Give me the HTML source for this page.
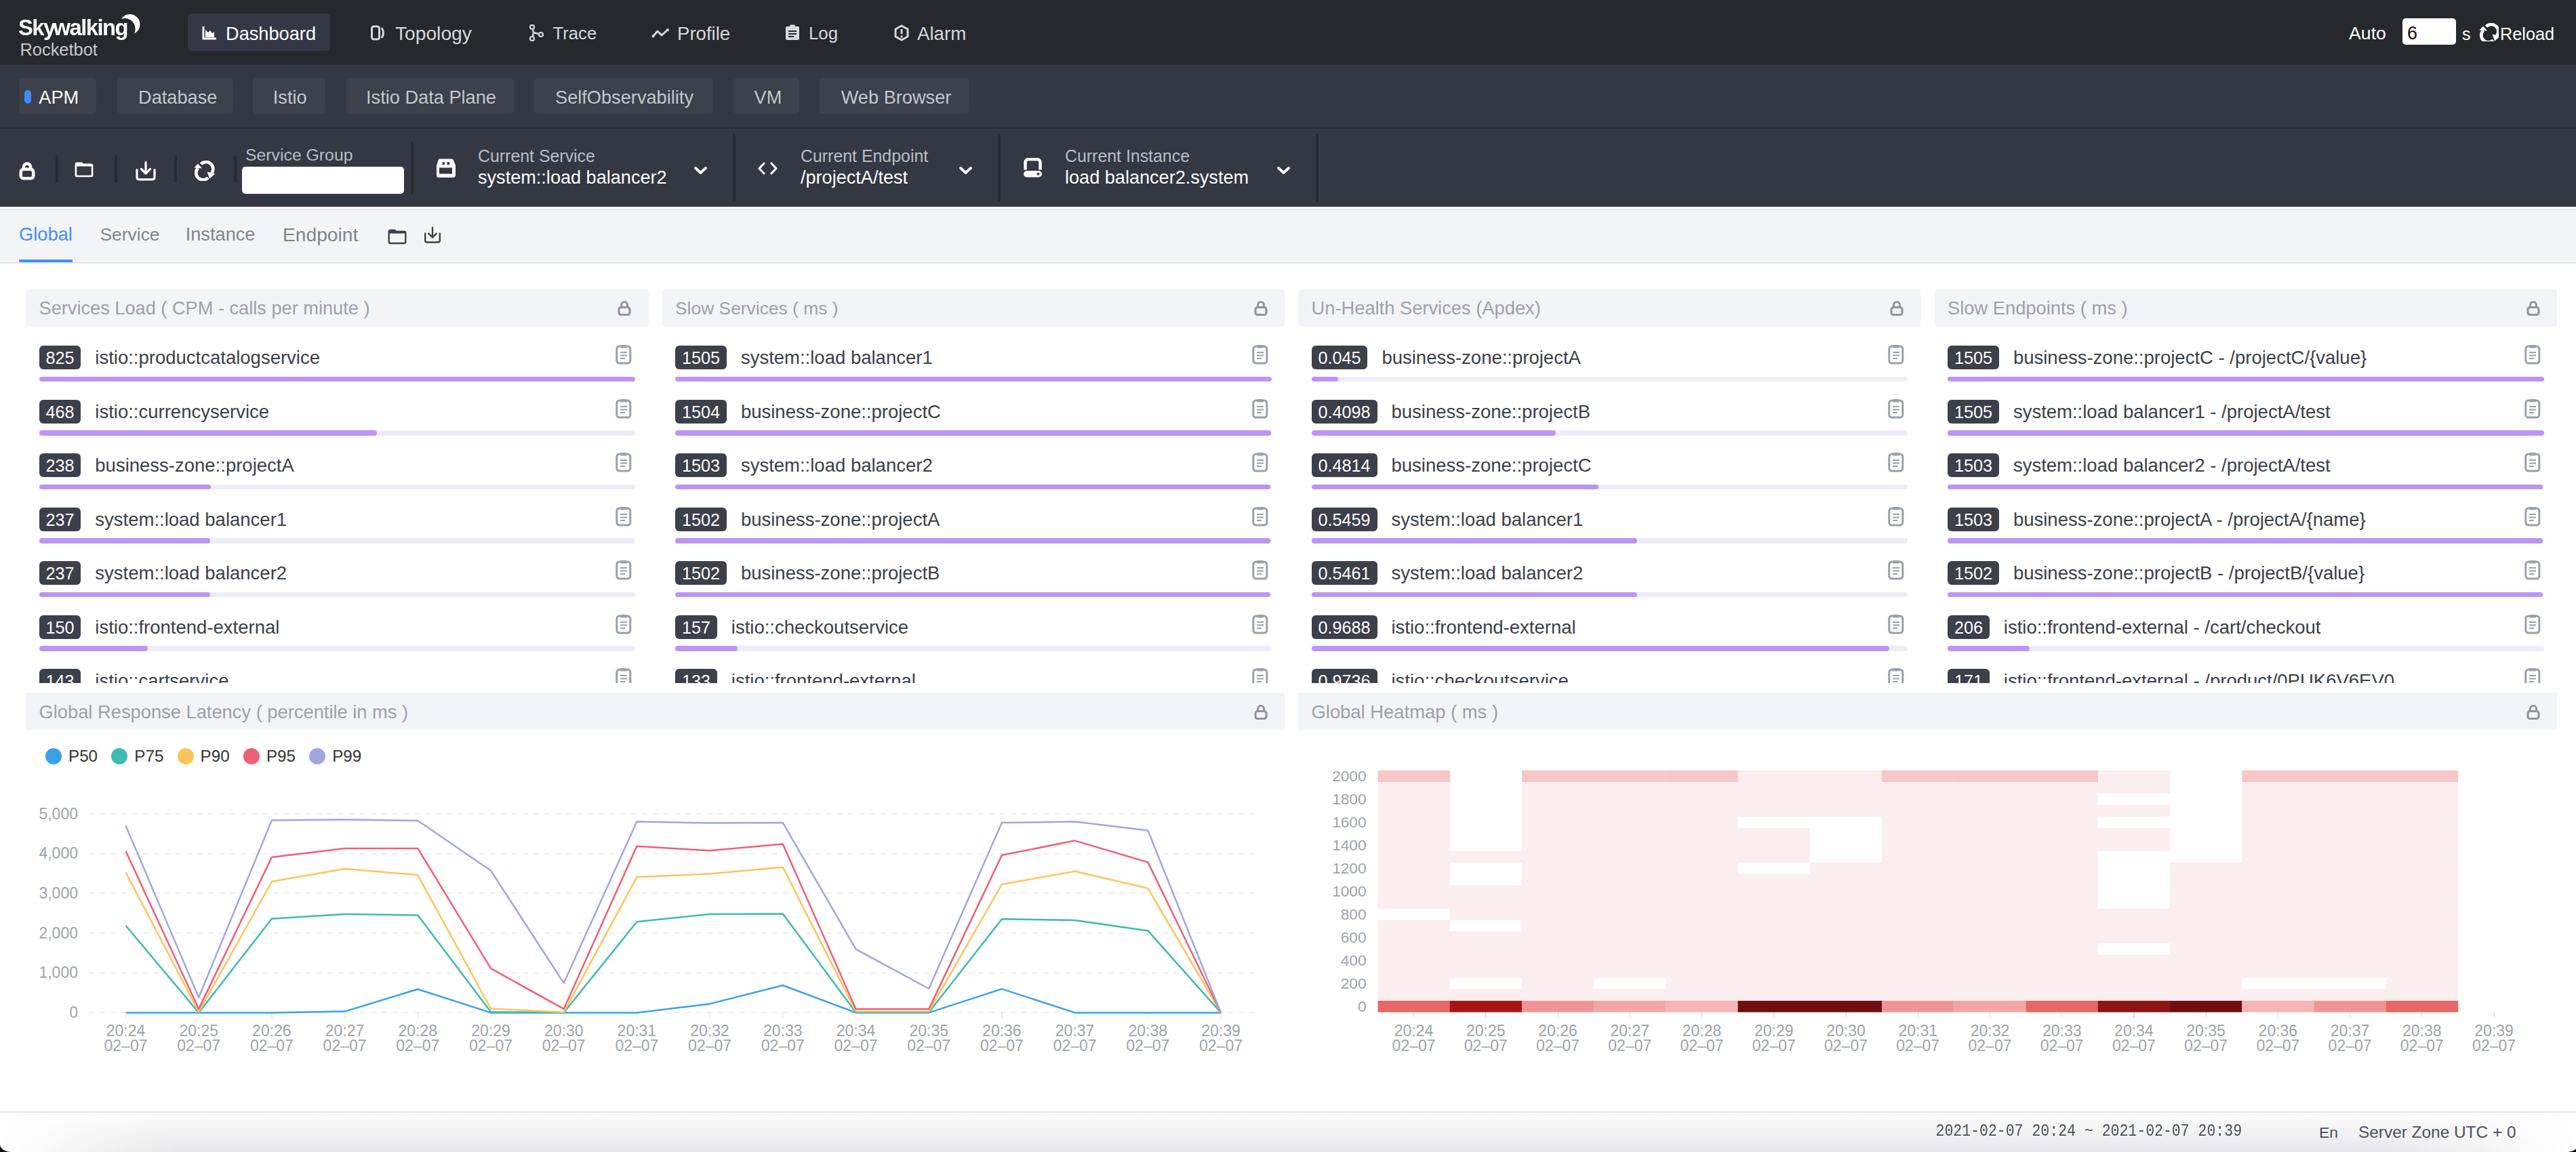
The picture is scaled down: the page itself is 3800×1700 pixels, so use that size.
<!DOCTYPE html><html><head><meta charset="utf-8"><style>
html,body{margin:0;padding:0;}
body{width:3800px;height:1700px;position:relative;overflow:hidden;background:#fff;font-family:"Liberation Sans",sans-serif;}
.t{position:absolute;white-space:nowrap;}
.r{position:absolute;}
</style></head><body>
<div class="r" style="left:0.0px;top:0.0px;width:3800.0px;height:95.0px;background:#25292d;border-radius:0px;"></div>
<div class="t" style="left:27.0px;top:23.1px;font-size:34px;line-height:34px;color:#ffffff;font-weight:bold;font-family:'Liberation Sans', sans-serif;letter-spacing:-1.6px;transform-origin:0 0;transform:scaleX(0.965);">Sk<span style="letter-spacing:-4px">y</span>walking</div>
<svg class="r" style="left:175.0px;top:19.0px;" width="34.0" height="34.0" viewBox="0 34 34"><defs><mask id="cm"><rect width="34" height="34" fill="#fff"/><circle cx="9" cy="23.5" r="15.6" fill="#000"/></mask></defs><circle cx="16.5" cy="17" r="15" fill="#fff" mask="url(#cm)"/></svg>
<div class="t" style="left:29.5px;top:61.4px;font-size:25.4px;line-height:25.4px;color:#c5c8d0;font-weight:normal;font-family:'Liberation Sans', sans-serif;">Rocketbot</div>
<div class="r" style="left:276.5px;top:20.0px;width:210.0px;height:55.0px;background:#343845;border-radius:6px;"></div>
<svg class="r" style="left:298.0px;top:38.0px;" width="22.0" height="21.0" viewBox="0 22 21"><path d="M2 1 V19 H21" stroke="#fff" stroke-width="3" fill="none"/><path d="M5 17 V6 L9 10 L12 7 L15 11 L18 9 V17 Z" fill="#fff"/></svg>
<div class="t" style="left:333.0px;top:35.9px;font-size:27.2px;line-height:27.2px;color:#ffffff;font-weight:normal;font-family:'Liberation Sans', sans-serif;">Dashboard</div>
<svg class="r" style="left:547.0px;top:37.0px;" width="23.0" height="23.0" viewBox="0 23 23"><rect x="1.5" y="2" width="11" height="19" rx="3" stroke="#d4d6da" stroke-width="3" fill="none"/><path d="M16 4 Q21 11.5 16 19" stroke="#d4d6da" stroke-width="3" fill="none"/></svg>
<div class="t" style="left:583.0px;top:35.0px;font-size:28.2px;line-height:28.2px;color:#d6d8dc;font-weight:normal;font-family:'Liberation Sans', sans-serif;">Topology</div>
<svg class="r" style="left:780.0px;top:36.0px;" width="23.0" height="25.0" viewBox="0 23 25"><path d="M5 4 L7 12 L5 21 M7 12 L18 15" stroke="#d6d8dc" stroke-width="2.5" fill="none"/><circle cx="5" cy="4" r="3" stroke="#d6d8dc" stroke-width="2.2" fill="#25292d"/><circle cx="5" cy="21" r="3" stroke="#d6d8dc" stroke-width="2.2" fill="#25292d"/><circle cx="18" cy="15" r="3" stroke="#d6d8dc" stroke-width="2.2" fill="#25292d"/></svg>
<div class="t" style="left:815.5px;top:37.2px;font-size:25.7px;line-height:25.7px;color:#d6d8dc;font-weight:normal;font-family:'Liberation Sans', sans-serif;">Trace</div>
<svg class="r" style="left:961.0px;top:41.0px;" width="27.0" height="15.0" viewBox="0 27 15"><path d="M2 13 L9 5 L15 11 L24 3" stroke="#d6d8dc" stroke-width="3" fill="none" stroke-linejoin="round"/><circle cx="2.5" cy="12.5" r="2" fill="#d6d8dc"/><circle cx="24" cy="3" r="2" fill="#d6d8dc"/></svg>
<div class="t" style="left:999.0px;top:35.5px;font-size:27.6px;line-height:27.6px;color:#d6d8dc;font-weight:normal;font-family:'Liberation Sans', sans-serif;">Profile</div>
<svg class="r" style="left:1158.0px;top:36.0px;" width="22.0" height="23.0" viewBox="0 22 23"><rect x="1" y="3" width="20" height="20" rx="2" fill="#d6d8dc"/><rect x="7" y="0.5" width="8" height="5" rx="1.5" fill="#d6d8dc"/><path d="M5 10 H17 M5 14 H17 M5 18 H13" stroke="#24282e" stroke-width="2"/></svg>
<div class="t" style="left:1193.0px;top:37.1px;font-size:25.8px;line-height:25.8px;color:#d6d8dc;font-weight:normal;font-family:'Liberation Sans', sans-serif;">Log</div>
<svg class="r" style="left:1319.0px;top:36.0px;" width="22.0" height="25.0" viewBox="0 22 25"><path d="M11 2 L20 7 V18 L11 23 L2 18 V7 Z" stroke="#d6d8dc" stroke-width="3" fill="none" stroke-linejoin="round"/><path d="M11 7 V14" stroke="#d6d8dc" stroke-width="3"/><circle cx="11" cy="18" r="1.7" fill="#d6d8dc"/></svg>
<div class="t" style="left:1353.0px;top:35.5px;font-size:27.7px;line-height:27.7px;color:#d6d8dc;font-weight:normal;font-family:'Liberation Sans', sans-serif;">Alarm</div>
<div class="t" style="left:3465.0px;top:36.3px;font-size:26.7px;line-height:26.7px;color:#ffffff;font-weight:normal;font-family:'Liberation Sans', sans-serif;">Auto</div>
<div class="r" style="left:3543.5px;top:27.0px;width:79.5px;height:38.5px;background:#ffffff;border-radius:5px;"></div>
<div class="t" style="left:3551.0px;top:36.0px;font-size:27px;line-height:27px;color:#111111;font-weight:normal;font-family:'Liberation Sans', sans-serif;">6</div>
<div class="t" style="left:3632.0px;top:37.8px;font-size:25px;line-height:25px;color:#ffffff;font-weight:normal;font-family:'Liberation Sans', sans-serif;">s</div>
<svg class="r" style="left:3657.0px;top:34.0px;" width="29.0" height="27.0" viewBox="0 32 30"><path d="M10.5 5.2 A10.3 10.3 0 0 1 25.5 19.5" stroke="#fff" stroke-width="4.6" fill="none"/><path d="M21 25.3 A10.3 10.3 0 0 1 6.2 10.8" stroke="#fff" stroke-width="4.6" fill="none"/><path d="M19.5 16.5 L31.5 19.5 L23 26.5 Z" fill="#fff"/><path d="M0.5 10.5 L6 4.5 L12 11.5 Z" fill="#fff"/></svg>
<div class="t" style="left:3688.0px;top:37.5px;font-size:25.3px;line-height:25.3px;color:#ffffff;font-weight:normal;font-family:'Liberation Sans', sans-serif;">Reload</div>
<div class="r" style="left:0.0px;top:95.0px;width:3800.0px;height:93.0px;background:#333842;border-radius:0px;"></div>
<div class="r" style="left:0.0px;top:188.0px;width:3800.0px;height:2.0px;background:#292d34;border-radius:0px;"></div>
<div class="r" style="left:28.0px;top:114.5px;width:114.0px;height:53.5px;background:#3c414b;border-radius:6px;"></div>
<div class="t" style="left:57.3px;top:129.7px;font-size:27.2px;line-height:27.2px;color:#ffffff;font-weight:normal;font-family:'Liberation Sans', sans-serif;">APM</div>
<div class="r" style="left:173.0px;top:114.5px;width:171.0px;height:53.5px;background:#3c414b;border-radius:6px;"></div>
<div class="t" style="left:204.0px;top:129.7px;font-size:27.2px;line-height:27.2px;color:#c3c7ce;font-weight:normal;font-family:'Liberation Sans', sans-serif;">Database</div>
<div class="r" style="left:373.0px;top:114.5px;width:107.0px;height:53.5px;background:#3c414b;border-radius:6px;"></div>
<div class="t" style="left:402.8px;top:129.7px;font-size:27.2px;line-height:27.2px;color:#c3c7ce;font-weight:normal;font-family:'Liberation Sans', sans-serif;">Istio</div>
<div class="r" style="left:510.0px;top:114.5px;width:248.0px;height:53.5px;background:#3c414b;border-radius:6px;"></div>
<div class="t" style="left:540.0px;top:129.7px;font-size:27.2px;line-height:27.2px;color:#c3c7ce;font-weight:normal;font-family:'Liberation Sans', sans-serif;">Istio Data Plane</div>
<div class="r" style="left:788.0px;top:114.5px;width:264.0px;height:53.5px;background:#3c414b;border-radius:6px;"></div>
<div class="t" style="left:819.0px;top:129.7px;font-size:27.2px;line-height:27.2px;color:#c3c7ce;font-weight:normal;font-family:'Liberation Sans', sans-serif;">SelfObservability</div>
<div class="r" style="left:1082.0px;top:114.5px;width:97.0px;height:53.5px;background:#3c414b;border-radius:6px;"></div>
<div class="t" style="left:1112.6px;top:129.7px;font-size:27.2px;line-height:27.2px;color:#c3c7ce;font-weight:normal;font-family:'Liberation Sans', sans-serif;">VM</div>
<div class="r" style="left:1209.0px;top:114.5px;width:221.0px;height:53.5px;background:#3c414b;border-radius:6px;"></div>
<div class="t" style="left:1240.7px;top:129.7px;font-size:27.2px;line-height:27.2px;color:#c3c7ce;font-weight:normal;font-family:'Liberation Sans', sans-serif;">Web Browser</div>
<div class="r" style="left:35.6px;top:133.0px;width:10.4px;height:20.0px;background:#3f8df4;border-radius:5px;"></div>
<div class="r" style="left:0.0px;top:190.0px;width:3800.0px;height:114.5px;background:#333842;border-radius:0px;"></div>
<svg class="r" style="left:28.0px;top:238.0px;" width="24.0" height="30.0" viewBox="0 24 30"><path d="M7 11 V8.5 A5 5 0 0 1 17 8.5 V11" stroke="#fff" stroke-width="4.5" fill="none"/><rect x="2.75" y="11.75" width="18.5" height="13.5" rx="4" stroke="#fff" stroke-width="4.5" fill="none"/></svg>
<div class="r" style="left:81.5px;top:229.0px;width:4.0px;height:41.0px;background:#282c32;border-radius:2px;"></div>
<div class="r" style="left:169.0px;top:229.0px;width:4.0px;height:41.0px;background:#282c32;border-radius:2px;"></div>
<div class="r" style="left:256.5px;top:229.0px;width:4.0px;height:41.0px;background:#282c32;border-radius:2px;"></div>
<div class="r" style="left:344.5px;top:229.0px;width:4.0px;height:41.0px;background:#282c32;border-radius:2px;"></div>
<svg class="r" style="left:109.6px;top:238.6px;" width="34.7" height="28.5" viewBox="0 28 23"><path d="M1.9 4 Q1.9 1.9 4 1.9 H10.5 L12.2 3.8 H24.1 Q26.1 3.8 26.1 5.8 V19 Q26.1 21 24.1 21 H4 Q1.9 21 1.9 18.9 Z" stroke="#fff" stroke-width="2.7" fill="none" stroke-linejoin="round"/><path d="M1.9 4 Q1.9 1.9 4 1.9 H10.5 L12.2 3.8 H24.1 Q26.1 3.8 26.1 5.8 V6.4 H1.9 Z" fill="#fff"/></svg>
<svg class="r" style="left:200.0px;top:237.5px;" width="30.0" height="29.0" viewBox="0 30 29"><path d="M15 1.6 V18 M8.5 11.5 L15 18 L21.5 11.5" stroke="#fff" stroke-width="3.2" fill="none" stroke-linecap="round" stroke-linejoin="round"/><path d="M2 12.5 V23.5 Q2 26.8 5.3 26.8 H24.7 Q28 26.8 28 23.5 V12.5" stroke="#fff" stroke-width="3.2" fill="none" stroke-linecap="round"/></svg>
<svg class="r" style="left:286.0px;top:237.0px;" width="32.0" height="30.0" viewBox="0 32 30"><path d="M10.5 5.2 A10.3 10.3 0 0 1 25.5 19.5" stroke="#fff" stroke-width="4.6" fill="none"/><path d="M21 25.3 A10.3 10.3 0 0 1 6.2 10.8" stroke="#fff" stroke-width="4.6" fill="none"/><path d="M19.5 16.5 L31.5 19.5 L23 26.5 Z" fill="#fff"/><path d="M0.5 10.5 L6 4.5 L12 11.5 Z" fill="#fff"/></svg>
<div class="t" style="left:362.0px;top:216.9px;font-size:24.8px;line-height:24.8px;color:#b9bdc6;font-weight:normal;font-family:'Liberation Sans', sans-serif;">Service Group</div>
<div class="r" style="left:357.0px;top:245.7px;width:239.0px;height:40.3px;background:#ffffff;border-radius:5px;"></div>
<div class="r" style="left:605.5px;top:208.5px;width:4.5px;height:78.0px;background:#282c32;border-radius:2px;"></div>
<svg class="r" style="left:643.0px;top:233.0px;" width="30.0" height="30.0" viewBox="0 30 30"><path d="M5 1.5 H23 Q25 1.5 26 3.5 L29 11 V25 Q29 29 25 29 H4 Q1 29 1 25 V11 L3.5 3.5 Q4 1.5 5 1.5 Z" fill="#fff"/><rect x="5" y="14.5" width="19" height="9" fill="#333842"/><path d="M9 10 L10.5 6 H13 V10 Z M16.5 10 V6 H19.5 L20.5 10 Z" fill="#333842"/></svg>
<div class="t" style="left:705.0px;top:218.4px;font-size:24.9px;line-height:24.9px;color:#b9bdc6;font-weight:normal;font-family:'Liberation Sans', sans-serif;">Current Service</div>
<div class="t" style="left:705.0px;top:248.4px;font-size:27.1px;line-height:27.1px;color:#ffffff;font-weight:normal;font-family:'Liberation Sans', sans-serif;">system::load balancer2</div>
<svg class="r" style="left:1023.5px;top:245.5px;" width="19.0" height="12.0" viewBox="0 19 12"><path d="M2 2 L9.5 9 L17 2" stroke="#fff" stroke-width="3.8" fill="none" stroke-linecap="round" stroke-linejoin="round"/></svg>
<div class="r" style="left:1081.0px;top:196.5px;width:4.0px;height:101.5px;background:#282c32;border-radius:2px;"></div>
<svg class="r" style="left:1116.5px;top:236.0px;" width="31.0" height="25.0" viewBox="0 31 25"><path d="M11 4 L3 12.5 L11 21 M20 4 L28 12.5 L20 21" stroke="#fff" stroke-width="3" fill="none" stroke-linejoin="round"/></svg>
<div class="t" style="left:1181.0px;top:218.4px;font-size:24.9px;line-height:24.9px;color:#b9bdc6;font-weight:normal;font-family:'Liberation Sans', sans-serif;">Current Endpoint</div>
<div class="t" style="left:1181.0px;top:248.4px;font-size:27.1px;line-height:27.1px;color:#ffffff;font-weight:normal;font-family:'Liberation Sans', sans-serif;">/projectA/test</div>
<svg class="r" style="left:1415.0px;top:245.5px;" width="19.0" height="12.0" viewBox="0 19 12"><path d="M2 2 L9.5 9 L17 2" stroke="#fff" stroke-width="3.8" fill="none" stroke-linecap="round" stroke-linejoin="round"/></svg>
<div class="r" style="left:1472.0px;top:196.5px;width:4.0px;height:101.5px;background:#282c32;border-radius:2px;"></div>
<svg class="r" style="left:1509.0px;top:233.0px;" width="29.0" height="30.0" viewBox="0 29 30"><path d="M3.5 17.5 V6.5 A4.5 4.5 0 0 1 8 2 H21 A4.5 4.5 0 0 1 25.5 6.5 V17.5" stroke="#fff" stroke-width="4.5" fill="none"/><rect x="1" y="19" width="27" height="9.5" rx="4.7" fill="#fff"/><circle cx="22.5" cy="23.8" r="2" fill="#333842"/></svg>
<div class="t" style="left:1571.0px;top:218.4px;font-size:24.9px;line-height:24.9px;color:#b9bdc6;font-weight:normal;font-family:'Liberation Sans', sans-serif;">Current Instance</div>
<div class="t" style="left:1571.0px;top:248.4px;font-size:27.1px;line-height:27.1px;color:#ffffff;font-weight:normal;font-family:'Liberation Sans', sans-serif;">load balancer2.system</div>
<svg class="r" style="left:1884.0px;top:245.5px;" width="19.0" height="12.0" viewBox="0 19 12"><path d="M2 2 L9.5 9 L17 2" stroke="#fff" stroke-width="3.8" fill="none" stroke-linecap="round" stroke-linejoin="round"/></svg>
<div class="r" style="left:1941.0px;top:196.5px;width:4.0px;height:101.5px;background:#282c32;border-radius:2px;"></div>
<div class="r" style="left:0.0px;top:306.5px;width:3800.0px;height:81.0px;background:#f3f4f6;border-radius:0px;"></div>
<div class="r" style="left:0.0px;top:303.5px;width:3800.0px;height:1.5px;background:#272a30;border-radius:0px;"></div>
<div class="r" style="left:0.0px;top:305.0px;width:3800.0px;height:3.0px;background:#ffffff;border-radius:0px;"></div>
<div class="r" style="left:0.0px;top:308.0px;width:3800.0px;height:1.5px;background:#e9eaed;border-radius:0px;"></div>
<div class="r" style="left:0.0px;top:387.0px;width:3800.0px;height:1.5px;background:#e3e5e9;border-radius:0px;"></div>
<div class="t" style="left:28.0px;top:332.3px;font-size:27.3px;line-height:27.3px;color:#448dfe;font-weight:normal;font-family:'Liberation Sans', sans-serif;">Global</div>
<div class="r" style="left:28.0px;top:383.0px;width:79.0px;height:3.5px;background:#448dfe;border-radius:1px;"></div>
<div class="t" style="left:147.5px;top:333.1px;font-size:26.4px;line-height:26.4px;color:#80858e;font-weight:normal;font-family:'Liberation Sans', sans-serif;">Service</div>
<div class="t" style="left:273.7px;top:332.4px;font-size:27.2px;line-height:27.2px;color:#80858e;font-weight:normal;font-family:'Liberation Sans', sans-serif;">Instance</div>
<div class="t" style="left:417.0px;top:331.5px;font-size:28.2px;line-height:28.2px;color:#80858e;font-weight:normal;font-family:'Liberation Sans', sans-serif;">Endpoint</div>
<svg class="r" style="left:572.0px;top:338.0px;" width="28.0" height="23.0" viewBox="0 28 23"><path d="M1.7 4 Q1.7 1.7 4 1.7 H10.5 L12.2 3.8 H24.3 Q26.3 3.8 26.3 5.8 V19 Q26.3 21 24.3 21 H4 Q1.7 21 1.7 18.7 Z" stroke="#3b4048" stroke-width="2.4" fill="none" stroke-linejoin="round"/><path d="M1.7 4 Q1.7 1.7 4 1.7 H10.5 L12.2 3.8 H24.3 Q26.3 3.8 26.3 5.8 V6.6 H1.7 Z" fill="#3b4048"/></svg>
<svg class="r" style="left:625.0px;top:334.0px;" width="26.0" height="26.0" viewBox="0 26 26"><path d="M13 1.8 V16 M7.2 10.6 L13 16.4 L18.8 10.6" stroke="#3b4048" stroke-width="2.4" fill="none" stroke-linecap="round" stroke-linejoin="round"/><path d="M2.2 10.5 V20.8 Q2.2 23.5 5 23.5 H21 Q23.8 23.5 23.8 20.8 V10.5" stroke="#3b4048" stroke-width="2.4" fill="none" stroke-linecap="round"/></svg>
<div class="r" style="left:38.0px;top:427.0px;width:918.5px;height:54.5px;background:#f3f4f7;border-radius:4px;"></div>
<div class="t" style="left:57.5px;top:441.4px;font-size:27.2px;line-height:27.2px;color:#9ba1ab;font-weight:normal;font-family:'Liberation Sans', sans-serif;">Services Load ( CPM - calls per minute )</div>
<svg class="r" style="left:911.0px;top:442.5px;" width="20.0" height="23.0" viewBox="0 20 23"><path d="M5.5 10 V7 A4.5 4.5 0 0 1 14.5 7 V10" stroke="#8f959e" stroke-width="3" fill="none"/><rect x="2" y="10.5" width="16" height="11" rx="3.2" stroke="#8f959e" stroke-width="3.2" fill="none"/></svg>
<div class="r" style="left:38px;top:481.5px;width:918.5px;height:526px;overflow:hidden">
<div class="r" style="left:19.5px;top:28.5px;width:61.8px;height:35px;background:#3c404a;border-radius:6px"></div>
<div class="t" style="left:19.5px;top:28.5px;width:61.8px;height:35px;line-height:36px;font-size:25.2px;color:#fff;text-align:center">825</div>
<div class="t" style="left:102.3px;top:32.6px;font-size:27.5px;line-height:27.5px;color:#3b4048">istio::productcatalogservice</div>
<svg class="r" style="left:870.0px;top:26.5px" width="24" height="30" viewBox="0 0 24 30"><rect x="1.8" y="3" width="20" height="25" rx="4" stroke="#9aa0a9" stroke-width="3" fill="none"/><rect x="7" y="1" width="10" height="4.5" rx="1.5" fill="#9aa0a9"/><path d="M7 12 H17 M7 16.5 H17 M7 21 H14" stroke="#9aa0a9" stroke-width="1.8"/></svg>
<div class="r" style="left:19.5px;top:74.0px;width:879.5px;height:7.5px;background:#eeecf6;border-radius:4px"></div>
<div class="r" style="left:19.5px;top:74.0px;width:879.5px;height:7.5px;background:#bd94f4;border-radius:4px"></div>
<div class="r" style="left:19.5px;top:108.0px;width:61.8px;height:35px;background:#3c404a;border-radius:6px"></div>
<div class="t" style="left:19.5px;top:108.0px;width:61.8px;height:35px;line-height:36px;font-size:25.2px;color:#fff;text-align:center">468</div>
<div class="t" style="left:102.3px;top:112.1px;font-size:27.5px;line-height:27.5px;color:#3b4048">istio::currencyservice</div>
<svg class="r" style="left:870.0px;top:106.0px" width="24" height="30" viewBox="0 0 24 30"><rect x="1.8" y="3" width="20" height="25" rx="4" stroke="#9aa0a9" stroke-width="3" fill="none"/><rect x="7" y="1" width="10" height="4.5" rx="1.5" fill="#9aa0a9"/><path d="M7 12 H17 M7 16.5 H17 M7 21 H14" stroke="#9aa0a9" stroke-width="1.8"/></svg>
<div class="r" style="left:19.5px;top:153.5px;width:879.5px;height:7.5px;background:#eeecf6;border-radius:4px"></div>
<div class="r" style="left:19.5px;top:153.5px;width:498.7px;height:7.5px;background:#bd94f4;border-radius:4px"></div>
<div class="r" style="left:19.5px;top:187.5px;width:61.8px;height:35px;background:#3c404a;border-radius:6px"></div>
<div class="t" style="left:19.5px;top:187.5px;width:61.8px;height:35px;line-height:36px;font-size:25.2px;color:#fff;text-align:center">238</div>
<div class="t" style="left:102.3px;top:191.6px;font-size:27.5px;line-height:27.5px;color:#3b4048">business-zone::projectA</div>
<svg class="r" style="left:870.0px;top:185.5px" width="24" height="30" viewBox="0 0 24 30"><rect x="1.8" y="3" width="20" height="25" rx="4" stroke="#9aa0a9" stroke-width="3" fill="none"/><rect x="7" y="1" width="10" height="4.5" rx="1.5" fill="#9aa0a9"/><path d="M7 12 H17 M7 16.5 H17 M7 21 H14" stroke="#9aa0a9" stroke-width="1.8"/></svg>
<div class="r" style="left:19.5px;top:233.0px;width:879.5px;height:7.5px;background:#eeecf6;border-radius:4px"></div>
<div class="r" style="left:19.5px;top:233.0px;width:253.7px;height:7.5px;background:#bd94f4;border-radius:4px"></div>
<div class="r" style="left:19.5px;top:267.0px;width:61.8px;height:35px;background:#3c404a;border-radius:6px"></div>
<div class="t" style="left:19.5px;top:267.0px;width:61.8px;height:35px;line-height:36px;font-size:25.2px;color:#fff;text-align:center">237</div>
<div class="t" style="left:102.3px;top:271.1px;font-size:27.5px;line-height:27.5px;color:#3b4048">system::load balancer1</div>
<svg class="r" style="left:870.0px;top:265.0px" width="24" height="30" viewBox="0 0 24 30"><rect x="1.8" y="3" width="20" height="25" rx="4" stroke="#9aa0a9" stroke-width="3" fill="none"/><rect x="7" y="1" width="10" height="4.5" rx="1.5" fill="#9aa0a9"/><path d="M7 12 H17 M7 16.5 H17 M7 21 H14" stroke="#9aa0a9" stroke-width="1.8"/></svg>
<div class="r" style="left:19.5px;top:312.5px;width:879.5px;height:7.5px;background:#eeecf6;border-radius:4px"></div>
<div class="r" style="left:19.5px;top:312.5px;width:252.4px;height:7.5px;background:#bd94f4;border-radius:4px"></div>
<div class="r" style="left:19.5px;top:346.5px;width:61.8px;height:35px;background:#3c404a;border-radius:6px"></div>
<div class="t" style="left:19.5px;top:346.5px;width:61.8px;height:35px;line-height:36px;font-size:25.2px;color:#fff;text-align:center">237</div>
<div class="t" style="left:102.3px;top:350.6px;font-size:27.5px;line-height:27.5px;color:#3b4048">system::load balancer2</div>
<svg class="r" style="left:870.0px;top:344.5px" width="24" height="30" viewBox="0 0 24 30"><rect x="1.8" y="3" width="20" height="25" rx="4" stroke="#9aa0a9" stroke-width="3" fill="none"/><rect x="7" y="1" width="10" height="4.5" rx="1.5" fill="#9aa0a9"/><path d="M7 12 H17 M7 16.5 H17 M7 21 H14" stroke="#9aa0a9" stroke-width="1.8"/></svg>
<div class="r" style="left:19.5px;top:392.0px;width:879.5px;height:7.5px;background:#eeecf6;border-radius:4px"></div>
<div class="r" style="left:19.5px;top:392.0px;width:252.4px;height:7.5px;background:#bd94f4;border-radius:4px"></div>
<div class="r" style="left:19.5px;top:426.0px;width:61.8px;height:35px;background:#3c404a;border-radius:6px"></div>
<div class="t" style="left:19.5px;top:426.0px;width:61.8px;height:35px;line-height:36px;font-size:25.2px;color:#fff;text-align:center">150</div>
<div class="t" style="left:102.3px;top:430.1px;font-size:27.5px;line-height:27.5px;color:#3b4048">istio::frontend-external</div>
<svg class="r" style="left:870.0px;top:424.0px" width="24" height="30" viewBox="0 0 24 30"><rect x="1.8" y="3" width="20" height="25" rx="4" stroke="#9aa0a9" stroke-width="3" fill="none"/><rect x="7" y="1" width="10" height="4.5" rx="1.5" fill="#9aa0a9"/><path d="M7 12 H17 M7 16.5 H17 M7 21 H14" stroke="#9aa0a9" stroke-width="1.8"/></svg>
<div class="r" style="left:19.5px;top:471.5px;width:879.5px;height:7.5px;background:#eeecf6;border-radius:4px"></div>
<div class="r" style="left:19.5px;top:471.5px;width:160.1px;height:7.5px;background:#bd94f4;border-radius:4px"></div>
<div class="r" style="left:19.5px;top:505.5px;width:61.8px;height:35px;background:#3c404a;border-radius:6px"></div>
<div class="t" style="left:19.5px;top:505.5px;width:61.8px;height:35px;line-height:36px;font-size:25.2px;color:#fff;text-align:center">143</div>
<div class="t" style="left:102.3px;top:509.6px;font-size:27.5px;line-height:27.5px;color:#3b4048">istio::cartservice</div>
<svg class="r" style="left:870.0px;top:503.5px" width="24" height="30" viewBox="0 0 24 30"><rect x="1.8" y="3" width="20" height="25" rx="4" stroke="#9aa0a9" stroke-width="3" fill="none"/><rect x="7" y="1" width="10" height="4.5" rx="1.5" fill="#9aa0a9"/><path d="M7 12 H17 M7 16.5 H17 M7 21 H14" stroke="#9aa0a9" stroke-width="1.8"/></svg>
<div class="r" style="left:19.5px;top:551.0px;width:879.5px;height:7.5px;background:#eeecf6;border-radius:4px"></div>
<div class="r" style="left:19.5px;top:551.0px;width:152.2px;height:7.5px;background:#bd94f4;border-radius:4px"></div>
</div>
<div class="r" style="left:976.5px;top:427.0px;width:918.5px;height:54.5px;background:#f3f4f7;border-radius:4px;"></div>
<div class="t" style="left:996.0px;top:442.1px;font-size:26.4px;line-height:26.4px;color:#9ba1ab;font-weight:normal;font-family:'Liberation Sans', sans-serif;">Slow Services ( ms )</div>
<svg class="r" style="left:1849.5px;top:442.5px;" width="20.0" height="23.0" viewBox="0 20 23"><path d="M5.5 10 V7 A4.5 4.5 0 0 1 14.5 7 V10" stroke="#8f959e" stroke-width="3" fill="none"/><rect x="2" y="10.5" width="16" height="11" rx="3.2" stroke="#8f959e" stroke-width="3.2" fill="none"/></svg>
<div class="r" style="left:976.5px;top:481.5px;width:918.5px;height:526px;overflow:hidden">
<div class="r" style="left:19.5px;top:28.5px;width:75.9px;height:35px;background:#3c404a;border-radius:6px"></div>
<div class="t" style="left:19.5px;top:28.5px;width:75.9px;height:35px;line-height:36px;font-size:25.2px;color:#fff;text-align:center">1505</div>
<div class="t" style="left:116.4px;top:32.6px;font-size:27.5px;line-height:27.5px;color:#3b4048">system::load balancer1</div>
<svg class="r" style="left:870.0px;top:26.5px" width="24" height="30" viewBox="0 0 24 30"><rect x="1.8" y="3" width="20" height="25" rx="4" stroke="#9aa0a9" stroke-width="3" fill="none"/><rect x="7" y="1" width="10" height="4.5" rx="1.5" fill="#9aa0a9"/><path d="M7 12 H17 M7 16.5 H17 M7 21 H14" stroke="#9aa0a9" stroke-width="1.8"/></svg>
<div class="r" style="left:19.5px;top:74.0px;width:879.5px;height:7.5px;background:#eeecf6;border-radius:4px"></div>
<div class="r" style="left:19.5px;top:74.0px;width:879.5px;height:7.5px;background:#bd94f4;border-radius:4px"></div>
<div class="r" style="left:19.5px;top:108.0px;width:75.9px;height:35px;background:#3c404a;border-radius:6px"></div>
<div class="t" style="left:19.5px;top:108.0px;width:75.9px;height:35px;line-height:36px;font-size:25.2px;color:#fff;text-align:center">1504</div>
<div class="t" style="left:116.4px;top:112.1px;font-size:27.5px;line-height:27.5px;color:#3b4048">business-zone::projectC</div>
<svg class="r" style="left:870.0px;top:106.0px" width="24" height="30" viewBox="0 0 24 30"><rect x="1.8" y="3" width="20" height="25" rx="4" stroke="#9aa0a9" stroke-width="3" fill="none"/><rect x="7" y="1" width="10" height="4.5" rx="1.5" fill="#9aa0a9"/><path d="M7 12 H17 M7 16.5 H17 M7 21 H14" stroke="#9aa0a9" stroke-width="1.8"/></svg>
<div class="r" style="left:19.5px;top:153.5px;width:879.5px;height:7.5px;background:#eeecf6;border-radius:4px"></div>
<div class="r" style="left:19.5px;top:153.5px;width:878.9px;height:7.5px;background:#bd94f4;border-radius:4px"></div>
<div class="r" style="left:19.5px;top:187.5px;width:75.9px;height:35px;background:#3c404a;border-radius:6px"></div>
<div class="t" style="left:19.5px;top:187.5px;width:75.9px;height:35px;line-height:36px;font-size:25.2px;color:#fff;text-align:center">1503</div>
<div class="t" style="left:116.4px;top:191.6px;font-size:27.5px;line-height:27.5px;color:#3b4048">system::load balancer2</div>
<svg class="r" style="left:870.0px;top:185.5px" width="24" height="30" viewBox="0 0 24 30"><rect x="1.8" y="3" width="20" height="25" rx="4" stroke="#9aa0a9" stroke-width="3" fill="none"/><rect x="7" y="1" width="10" height="4.5" rx="1.5" fill="#9aa0a9"/><path d="M7 12 H17 M7 16.5 H17 M7 21 H14" stroke="#9aa0a9" stroke-width="1.8"/></svg>
<div class="r" style="left:19.5px;top:233.0px;width:879.5px;height:7.5px;background:#eeecf6;border-radius:4px"></div>
<div class="r" style="left:19.5px;top:233.0px;width:878.4px;height:7.5px;background:#bd94f4;border-radius:4px"></div>
<div class="r" style="left:19.5px;top:267.0px;width:75.9px;height:35px;background:#3c404a;border-radius:6px"></div>
<div class="t" style="left:19.5px;top:267.0px;width:75.9px;height:35px;line-height:36px;font-size:25.2px;color:#fff;text-align:center">1502</div>
<div class="t" style="left:116.4px;top:271.1px;font-size:27.5px;line-height:27.5px;color:#3b4048">business-zone::projectA</div>
<svg class="r" style="left:870.0px;top:265.0px" width="24" height="30" viewBox="0 0 24 30"><rect x="1.8" y="3" width="20" height="25" rx="4" stroke="#9aa0a9" stroke-width="3" fill="none"/><rect x="7" y="1" width="10" height="4.5" rx="1.5" fill="#9aa0a9"/><path d="M7 12 H17 M7 16.5 H17 M7 21 H14" stroke="#9aa0a9" stroke-width="1.8"/></svg>
<div class="r" style="left:19.5px;top:312.5px;width:879.5px;height:7.5px;background:#eeecf6;border-radius:4px"></div>
<div class="r" style="left:19.5px;top:312.5px;width:877.7px;height:7.5px;background:#bd94f4;border-radius:4px"></div>
<div class="r" style="left:19.5px;top:346.5px;width:75.9px;height:35px;background:#3c404a;border-radius:6px"></div>
<div class="t" style="left:19.5px;top:346.5px;width:75.9px;height:35px;line-height:36px;font-size:25.2px;color:#fff;text-align:center">1502</div>
<div class="t" style="left:116.4px;top:350.6px;font-size:27.5px;line-height:27.5px;color:#3b4048">business-zone::projectB</div>
<svg class="r" style="left:870.0px;top:344.5px" width="24" height="30" viewBox="0 0 24 30"><rect x="1.8" y="3" width="20" height="25" rx="4" stroke="#9aa0a9" stroke-width="3" fill="none"/><rect x="7" y="1" width="10" height="4.5" rx="1.5" fill="#9aa0a9"/><path d="M7 12 H17 M7 16.5 H17 M7 21 H14" stroke="#9aa0a9" stroke-width="1.8"/></svg>
<div class="r" style="left:19.5px;top:392.0px;width:879.5px;height:7.5px;background:#eeecf6;border-radius:4px"></div>
<div class="r" style="left:19.5px;top:392.0px;width:877.7px;height:7.5px;background:#bd94f4;border-radius:4px"></div>
<div class="r" style="left:19.5px;top:426.0px;width:61.8px;height:35px;background:#3c404a;border-radius:6px"></div>
<div class="t" style="left:19.5px;top:426.0px;width:61.8px;height:35px;line-height:36px;font-size:25.2px;color:#fff;text-align:center">157</div>
<div class="t" style="left:102.3px;top:430.1px;font-size:27.5px;line-height:27.5px;color:#3b4048">istio::checkoutservice</div>
<svg class="r" style="left:870.0px;top:424.0px" width="24" height="30" viewBox="0 0 24 30"><rect x="1.8" y="3" width="20" height="25" rx="4" stroke="#9aa0a9" stroke-width="3" fill="none"/><rect x="7" y="1" width="10" height="4.5" rx="1.5" fill="#9aa0a9"/><path d="M7 12 H17 M7 16.5 H17 M7 21 H14" stroke="#9aa0a9" stroke-width="1.8"/></svg>
<div class="r" style="left:19.5px;top:471.5px;width:879.5px;height:7.5px;background:#eeecf6;border-radius:4px"></div>
<div class="r" style="left:19.5px;top:471.5px;width:91.5px;height:7.5px;background:#bd94f4;border-radius:4px"></div>
<div class="r" style="left:19.5px;top:505.5px;width:61.8px;height:35px;background:#3c404a;border-radius:6px"></div>
<div class="t" style="left:19.5px;top:505.5px;width:61.8px;height:35px;line-height:36px;font-size:25.2px;color:#fff;text-align:center">133</div>
<div class="t" style="left:102.3px;top:509.6px;font-size:27.5px;line-height:27.5px;color:#3b4048">istio::frontend-external</div>
<svg class="r" style="left:870.0px;top:503.5px" width="24" height="30" viewBox="0 0 24 30"><rect x="1.8" y="3" width="20" height="25" rx="4" stroke="#9aa0a9" stroke-width="3" fill="none"/><rect x="7" y="1" width="10" height="4.5" rx="1.5" fill="#9aa0a9"/><path d="M7 12 H17 M7 16.5 H17 M7 21 H14" stroke="#9aa0a9" stroke-width="1.8"/></svg>
<div class="r" style="left:19.5px;top:551.0px;width:879.5px;height:7.5px;background:#eeecf6;border-radius:4px"></div>
<div class="r" style="left:19.5px;top:551.0px;width:77.4px;height:7.5px;background:#bd94f4;border-radius:4px"></div>
</div>
<div class="r" style="left:1915.0px;top:427.0px;width:918.5px;height:54.5px;background:#f3f4f7;border-radius:4px;"></div>
<div class="t" style="left:1934.5px;top:441.3px;font-size:27.3px;line-height:27.3px;color:#9ba1ab;font-weight:normal;font-family:'Liberation Sans', sans-serif;">Un-Health Services (Apdex)</div>
<svg class="r" style="left:2788.0px;top:442.5px;" width="20.0" height="23.0" viewBox="0 20 23"><path d="M5.5 10 V7 A4.5 4.5 0 0 1 14.5 7 V10" stroke="#8f959e" stroke-width="3" fill="none"/><rect x="2" y="10.5" width="16" height="11" rx="3.2" stroke="#8f959e" stroke-width="3.2" fill="none"/></svg>
<div class="r" style="left:1915px;top:481.5px;width:918.5px;height:526px;overflow:hidden">
<div class="r" style="left:19.5px;top:28.5px;width:82.9px;height:35px;background:#3c404a;border-radius:6px"></div>
<div class="t" style="left:19.5px;top:28.5px;width:82.9px;height:35px;line-height:36px;font-size:25.2px;color:#fff;text-align:center">0.045</div>
<div class="t" style="left:123.4px;top:32.6px;font-size:27.5px;line-height:27.5px;color:#3b4048">business-zone::projectA</div>
<svg class="r" style="left:870.0px;top:26.5px" width="24" height="30" viewBox="0 0 24 30"><rect x="1.8" y="3" width="20" height="25" rx="4" stroke="#9aa0a9" stroke-width="3" fill="none"/><rect x="7" y="1" width="10" height="4.5" rx="1.5" fill="#9aa0a9"/><path d="M7 12 H17 M7 16.5 H17 M7 21 H14" stroke="#9aa0a9" stroke-width="1.8"/></svg>
<div class="r" style="left:19.5px;top:74.0px;width:879.5px;height:7.5px;background:#eeecf6;border-radius:4px"></div>
<div class="r" style="left:19.5px;top:74.0px;width:39.6px;height:7.5px;background:#bd94f4;border-radius:4px"></div>
<div class="r" style="left:19.5px;top:108.0px;width:97.0px;height:35px;background:#3c404a;border-radius:6px"></div>
<div class="t" style="left:19.5px;top:108.0px;width:97.0px;height:35px;line-height:36px;font-size:25.2px;color:#fff;text-align:center">0.4098</div>
<div class="t" style="left:137.5px;top:112.1px;font-size:27.5px;line-height:27.5px;color:#3b4048">business-zone::projectB</div>
<svg class="r" style="left:870.0px;top:106.0px" width="24" height="30" viewBox="0 0 24 30"><rect x="1.8" y="3" width="20" height="25" rx="4" stroke="#9aa0a9" stroke-width="3" fill="none"/><rect x="7" y="1" width="10" height="4.5" rx="1.5" fill="#9aa0a9"/><path d="M7 12 H17 M7 16.5 H17 M7 21 H14" stroke="#9aa0a9" stroke-width="1.8"/></svg>
<div class="r" style="left:19.5px;top:153.5px;width:879.5px;height:7.5px;background:#eeecf6;border-radius:4px"></div>
<div class="r" style="left:19.5px;top:153.5px;width:360.4px;height:7.5px;background:#bd94f4;border-radius:4px"></div>
<div class="r" style="left:19.5px;top:187.5px;width:97.0px;height:35px;background:#3c404a;border-radius:6px"></div>
<div class="t" style="left:19.5px;top:187.5px;width:97.0px;height:35px;line-height:36px;font-size:25.2px;color:#fff;text-align:center">0.4814</div>
<div class="t" style="left:137.5px;top:191.6px;font-size:27.5px;line-height:27.5px;color:#3b4048">business-zone::projectC</div>
<svg class="r" style="left:870.0px;top:185.5px" width="24" height="30" viewBox="0 0 24 30"><rect x="1.8" y="3" width="20" height="25" rx="4" stroke="#9aa0a9" stroke-width="3" fill="none"/><rect x="7" y="1" width="10" height="4.5" rx="1.5" fill="#9aa0a9"/><path d="M7 12 H17 M7 16.5 H17 M7 21 H14" stroke="#9aa0a9" stroke-width="1.8"/></svg>
<div class="r" style="left:19.5px;top:233.0px;width:879.5px;height:7.5px;background:#eeecf6;border-radius:4px"></div>
<div class="r" style="left:19.5px;top:233.0px;width:423.4px;height:7.5px;background:#bd94f4;border-radius:4px"></div>
<div class="r" style="left:19.5px;top:267.0px;width:97.0px;height:35px;background:#3c404a;border-radius:6px"></div>
<div class="t" style="left:19.5px;top:267.0px;width:97.0px;height:35px;line-height:36px;font-size:25.2px;color:#fff;text-align:center">0.5459</div>
<div class="t" style="left:137.5px;top:271.1px;font-size:27.5px;line-height:27.5px;color:#3b4048">system::load balancer1</div>
<svg class="r" style="left:870.0px;top:265.0px" width="24" height="30" viewBox="0 0 24 30"><rect x="1.8" y="3" width="20" height="25" rx="4" stroke="#9aa0a9" stroke-width="3" fill="none"/><rect x="7" y="1" width="10" height="4.5" rx="1.5" fill="#9aa0a9"/><path d="M7 12 H17 M7 16.5 H17 M7 21 H14" stroke="#9aa0a9" stroke-width="1.8"/></svg>
<div class="r" style="left:19.5px;top:312.5px;width:879.5px;height:7.5px;background:#eeecf6;border-radius:4px"></div>
<div class="r" style="left:19.5px;top:312.5px;width:480.1px;height:7.5px;background:#bd94f4;border-radius:4px"></div>
<div class="r" style="left:19.5px;top:346.5px;width:97.0px;height:35px;background:#3c404a;border-radius:6px"></div>
<div class="t" style="left:19.5px;top:346.5px;width:97.0px;height:35px;line-height:36px;font-size:25.2px;color:#fff;text-align:center">0.5461</div>
<div class="t" style="left:137.5px;top:350.6px;font-size:27.5px;line-height:27.5px;color:#3b4048">system::load balancer2</div>
<svg class="r" style="left:870.0px;top:344.5px" width="24" height="30" viewBox="0 0 24 30"><rect x="1.8" y="3" width="20" height="25" rx="4" stroke="#9aa0a9" stroke-width="3" fill="none"/><rect x="7" y="1" width="10" height="4.5" rx="1.5" fill="#9aa0a9"/><path d="M7 12 H17 M7 16.5 H17 M7 21 H14" stroke="#9aa0a9" stroke-width="1.8"/></svg>
<div class="r" style="left:19.5px;top:392.0px;width:879.5px;height:7.5px;background:#eeecf6;border-radius:4px"></div>
<div class="r" style="left:19.5px;top:392.0px;width:480.3px;height:7.5px;background:#bd94f4;border-radius:4px"></div>
<div class="r" style="left:19.5px;top:426.0px;width:97.0px;height:35px;background:#3c404a;border-radius:6px"></div>
<div class="t" style="left:19.5px;top:426.0px;width:97.0px;height:35px;line-height:36px;font-size:25.2px;color:#fff;text-align:center">0.9688</div>
<div class="t" style="left:137.5px;top:430.1px;font-size:27.5px;line-height:27.5px;color:#3b4048">istio::frontend-external</div>
<svg class="r" style="left:870.0px;top:424.0px" width="24" height="30" viewBox="0 0 24 30"><rect x="1.8" y="3" width="20" height="25" rx="4" stroke="#9aa0a9" stroke-width="3" fill="none"/><rect x="7" y="1" width="10" height="4.5" rx="1.5" fill="#9aa0a9"/><path d="M7 12 H17 M7 16.5 H17 M7 21 H14" stroke="#9aa0a9" stroke-width="1.8"/></svg>
<div class="r" style="left:19.5px;top:471.5px;width:879.5px;height:7.5px;background:#eeecf6;border-radius:4px"></div>
<div class="r" style="left:19.5px;top:471.5px;width:852.1px;height:7.5px;background:#bd94f4;border-radius:4px"></div>
<div class="r" style="left:19.5px;top:505.5px;width:97.0px;height:35px;background:#3c404a;border-radius:6px"></div>
<div class="t" style="left:19.5px;top:505.5px;width:97.0px;height:35px;line-height:36px;font-size:25.2px;color:#fff;text-align:center">0.9736</div>
<div class="t" style="left:137.5px;top:509.6px;font-size:27.5px;line-height:27.5px;color:#3b4048">istio::checkoutservice</div>
<svg class="r" style="left:870.0px;top:503.5px" width="24" height="30" viewBox="0 0 24 30"><rect x="1.8" y="3" width="20" height="25" rx="4" stroke="#9aa0a9" stroke-width="3" fill="none"/><rect x="7" y="1" width="10" height="4.5" rx="1.5" fill="#9aa0a9"/><path d="M7 12 H17 M7 16.5 H17 M7 21 H14" stroke="#9aa0a9" stroke-width="1.8"/></svg>
<div class="r" style="left:19.5px;top:551.0px;width:879.5px;height:7.5px;background:#eeecf6;border-radius:4px"></div>
<div class="r" style="left:19.5px;top:551.0px;width:856.3px;height:7.5px;background:#bd94f4;border-radius:4px"></div>
</div>
<div class="r" style="left:2853.5px;top:427.0px;width:918.5px;height:54.5px;background:#f3f4f7;border-radius:4px;"></div>
<div class="t" style="left:2873.0px;top:441.3px;font-size:27.3px;line-height:27.3px;color:#9ba1ab;font-weight:normal;font-family:'Liberation Sans', sans-serif;">Slow Endpoints ( ms )</div>
<svg class="r" style="left:3726.5px;top:442.5px;" width="20.0" height="23.0" viewBox="0 20 23"><path d="M5.5 10 V7 A4.5 4.5 0 0 1 14.5 7 V10" stroke="#8f959e" stroke-width="3" fill="none"/><rect x="2" y="10.5" width="16" height="11" rx="3.2" stroke="#8f959e" stroke-width="3.2" fill="none"/></svg>
<div class="r" style="left:2853.5px;top:481.5px;width:918.5px;height:526px;overflow:hidden">
<div class="r" style="left:19.5px;top:28.5px;width:75.9px;height:35px;background:#3c404a;border-radius:6px"></div>
<div class="t" style="left:19.5px;top:28.5px;width:75.9px;height:35px;line-height:36px;font-size:25.2px;color:#fff;text-align:center">1505</div>
<div class="t" style="left:116.4px;top:32.6px;font-size:27.5px;line-height:27.5px;color:#3b4048">business-zone::projectC - /projectC/{value}</div>
<svg class="r" style="left:870.0px;top:26.5px" width="24" height="30" viewBox="0 0 24 30"><rect x="1.8" y="3" width="20" height="25" rx="4" stroke="#9aa0a9" stroke-width="3" fill="none"/><rect x="7" y="1" width="10" height="4.5" rx="1.5" fill="#9aa0a9"/><path d="M7 12 H17 M7 16.5 H17 M7 21 H14" stroke="#9aa0a9" stroke-width="1.8"/></svg>
<div class="r" style="left:19.5px;top:74.0px;width:879.5px;height:7.5px;background:#eeecf6;border-radius:4px"></div>
<div class="r" style="left:19.5px;top:74.0px;width:879.5px;height:7.5px;background:#bd94f4;border-radius:4px"></div>
<div class="r" style="left:19.5px;top:108.0px;width:75.9px;height:35px;background:#3c404a;border-radius:6px"></div>
<div class="t" style="left:19.5px;top:108.0px;width:75.9px;height:35px;line-height:36px;font-size:25.2px;color:#fff;text-align:center">1505</div>
<div class="t" style="left:116.4px;top:112.1px;font-size:27.5px;line-height:27.5px;color:#3b4048">system::load balancer1 - /projectA/test</div>
<svg class="r" style="left:870.0px;top:106.0px" width="24" height="30" viewBox="0 0 24 30"><rect x="1.8" y="3" width="20" height="25" rx="4" stroke="#9aa0a9" stroke-width="3" fill="none"/><rect x="7" y="1" width="10" height="4.5" rx="1.5" fill="#9aa0a9"/><path d="M7 12 H17 M7 16.5 H17 M7 21 H14" stroke="#9aa0a9" stroke-width="1.8"/></svg>
<div class="r" style="left:19.5px;top:153.5px;width:879.5px;height:7.5px;background:#eeecf6;border-radius:4px"></div>
<div class="r" style="left:19.5px;top:153.5px;width:879.5px;height:7.5px;background:#bd94f4;border-radius:4px"></div>
<div class="r" style="left:19.5px;top:187.5px;width:75.9px;height:35px;background:#3c404a;border-radius:6px"></div>
<div class="t" style="left:19.5px;top:187.5px;width:75.9px;height:35px;line-height:36px;font-size:25.2px;color:#fff;text-align:center">1503</div>
<div class="t" style="left:116.4px;top:191.6px;font-size:27.5px;line-height:27.5px;color:#3b4048">system::load balancer2 - /projectA/test</div>
<svg class="r" style="left:870.0px;top:185.5px" width="24" height="30" viewBox="0 0 24 30"><rect x="1.8" y="3" width="20" height="25" rx="4" stroke="#9aa0a9" stroke-width="3" fill="none"/><rect x="7" y="1" width="10" height="4.5" rx="1.5" fill="#9aa0a9"/><path d="M7 12 H17 M7 16.5 H17 M7 21 H14" stroke="#9aa0a9" stroke-width="1.8"/></svg>
<div class="r" style="left:19.5px;top:233.0px;width:879.5px;height:7.5px;background:#eeecf6;border-radius:4px"></div>
<div class="r" style="left:19.5px;top:233.0px;width:878.4px;height:7.5px;background:#bd94f4;border-radius:4px"></div>
<div class="r" style="left:19.5px;top:267.0px;width:75.9px;height:35px;background:#3c404a;border-radius:6px"></div>
<div class="t" style="left:19.5px;top:267.0px;width:75.9px;height:35px;line-height:36px;font-size:25.2px;color:#fff;text-align:center">1503</div>
<div class="t" style="left:116.4px;top:271.1px;font-size:27.5px;line-height:27.5px;color:#3b4048">business-zone::projectA - /projectA/{name}</div>
<svg class="r" style="left:870.0px;top:265.0px" width="24" height="30" viewBox="0 0 24 30"><rect x="1.8" y="3" width="20" height="25" rx="4" stroke="#9aa0a9" stroke-width="3" fill="none"/><rect x="7" y="1" width="10" height="4.5" rx="1.5" fill="#9aa0a9"/><path d="M7 12 H17 M7 16.5 H17 M7 21 H14" stroke="#9aa0a9" stroke-width="1.8"/></svg>
<div class="r" style="left:19.5px;top:312.5px;width:879.5px;height:7.5px;background:#eeecf6;border-radius:4px"></div>
<div class="r" style="left:19.5px;top:312.5px;width:878.4px;height:7.5px;background:#bd94f4;border-radius:4px"></div>
<div class="r" style="left:19.5px;top:346.5px;width:75.9px;height:35px;background:#3c404a;border-radius:6px"></div>
<div class="t" style="left:19.5px;top:346.5px;width:75.9px;height:35px;line-height:36px;font-size:25.2px;color:#fff;text-align:center">1502</div>
<div class="t" style="left:116.4px;top:350.6px;font-size:27.5px;line-height:27.5px;color:#3b4048">business-zone::projectB - /projectB/{value}</div>
<svg class="r" style="left:870.0px;top:344.5px" width="24" height="30" viewBox="0 0 24 30"><rect x="1.8" y="3" width="20" height="25" rx="4" stroke="#9aa0a9" stroke-width="3" fill="none"/><rect x="7" y="1" width="10" height="4.5" rx="1.5" fill="#9aa0a9"/><path d="M7 12 H17 M7 16.5 H17 M7 21 H14" stroke="#9aa0a9" stroke-width="1.8"/></svg>
<div class="r" style="left:19.5px;top:392.0px;width:879.5px;height:7.5px;background:#eeecf6;border-radius:4px"></div>
<div class="r" style="left:19.5px;top:392.0px;width:877.7px;height:7.5px;background:#bd94f4;border-radius:4px"></div>
<div class="r" style="left:19.5px;top:426.0px;width:61.8px;height:35px;background:#3c404a;border-radius:6px"></div>
<div class="t" style="left:19.5px;top:426.0px;width:61.8px;height:35px;line-height:36px;font-size:25.2px;color:#fff;text-align:center">206</div>
<div class="t" style="left:102.3px;top:430.1px;font-size:27.5px;line-height:27.5px;color:#3b4048">istio::frontend-external - /cart/checkout</div>
<svg class="r" style="left:870.0px;top:424.0px" width="24" height="30" viewBox="0 0 24 30"><rect x="1.8" y="3" width="20" height="25" rx="4" stroke="#9aa0a9" stroke-width="3" fill="none"/><rect x="7" y="1" width="10" height="4.5" rx="1.5" fill="#9aa0a9"/><path d="M7 12 H17 M7 16.5 H17 M7 21 H14" stroke="#9aa0a9" stroke-width="1.8"/></svg>
<div class="r" style="left:19.5px;top:471.5px;width:879.5px;height:7.5px;background:#eeecf6;border-radius:4px"></div>
<div class="r" style="left:19.5px;top:471.5px;width:120.5px;height:7.5px;background:#bd94f4;border-radius:4px"></div>
<div class="r" style="left:19.5px;top:505.5px;width:61.8px;height:35px;background:#3c404a;border-radius:6px"></div>
<div class="t" style="left:19.5px;top:505.5px;width:61.8px;height:35px;line-height:36px;font-size:25.2px;color:#fff;text-align:center">171</div>
<div class="t" style="left:102.3px;top:509.6px;font-size:27.5px;line-height:27.5px;color:#3b4048">istio::frontend-external - /product/0PUK6V6EV0</div>
<svg class="r" style="left:870.0px;top:503.5px" width="24" height="30" viewBox="0 0 24 30"><rect x="1.8" y="3" width="20" height="25" rx="4" stroke="#9aa0a9" stroke-width="3" fill="none"/><rect x="7" y="1" width="10" height="4.5" rx="1.5" fill="#9aa0a9"/><path d="M7 12 H17 M7 16.5 H17 M7 21 H14" stroke="#9aa0a9" stroke-width="1.8"/></svg>
<div class="r" style="left:19.5px;top:551.0px;width:879.5px;height:7.5px;background:#eeecf6;border-radius:4px"></div>
<div class="r" style="left:19.5px;top:551.0px;width:100.3px;height:7.5px;background:#bd94f4;border-radius:4px"></div>
</div>
<div class="r" style="left:38.0px;top:1022.0px;width:1857.0px;height:54.5px;background:#f3f4f7;border-radius:4px;"></div>
<div class="t" style="left:57.5px;top:1036.8px;font-size:27.3px;line-height:27.3px;color:#9ba1ab;font-weight:normal;font-family:'Liberation Sans', sans-serif;">Global Response Latency ( percentile in ms )</div>
<svg class="r" style="left:1849.5px;top:1038.5px;" width="20.0" height="23.0" viewBox="0 20 23"><path d="M5.5 10 V7 A4.5 4.5 0 0 1 14.5 7 V10" stroke="#8f959e" stroke-width="3" fill="none"/><rect x="2" y="10.5" width="16" height="11" rx="3.2" stroke="#8f959e" stroke-width="3.2" fill="none"/></svg>
<div class="r" style="left:1915.0px;top:1022.0px;width:1857.0px;height:54.5px;background:#f3f4f7;border-radius:4px;"></div>
<div class="t" style="left:1934.5px;top:1036.7px;font-size:27.4px;line-height:27.4px;color:#9ba1ab;font-weight:normal;font-family:'Liberation Sans', sans-serif;">Global Heatmap ( ms )</div>
<svg class="r" style="left:3726.5px;top:1038.5px;" width="20.0" height="23.0" viewBox="0 20 23"><path d="M5.5 10 V7 A4.5 4.5 0 0 1 14.5 7 V10" stroke="#8f959e" stroke-width="3" fill="none"/><rect x="2" y="10.5" width="16" height="11" rx="3.2" stroke="#8f959e" stroke-width="3.2" fill="none"/></svg>
<div class="r" style="left:67.0px;top:1104px;width:24px;height:24px;border-radius:12px;background:#3ba1e6"></div>
<div class="t" style="left:101.0px;top:1104.1px;font-size:24.2px;line-height:24.2px;color:#333333;font-weight:normal;font-family:'Liberation Sans', sans-serif;">P50</div>
<div class="r" style="left:164.3px;top:1104px;width:24px;height:24px;border-radius:12px;background:#3dbab1"></div>
<div class="t" style="left:198.3px;top:1104.1px;font-size:24.2px;line-height:24.2px;color:#333333;font-weight:normal;font-family:'Liberation Sans', sans-serif;">P75</div>
<div class="r" style="left:261.6px;top:1104px;width:24px;height:24px;border-radius:12px;background:#fcc45c"></div>
<div class="t" style="left:295.6px;top:1104.1px;font-size:24.2px;line-height:24.2px;color:#333333;font-weight:normal;font-family:'Liberation Sans', sans-serif;">P90</div>
<div class="r" style="left:358.9px;top:1104px;width:24px;height:24px;border-radius:12px;background:#ef5f77"></div>
<div class="t" style="left:392.9px;top:1104.1px;font-size:24.2px;line-height:24.2px;color:#333333;font-weight:normal;font-family:'Liberation Sans', sans-serif;">P95</div>
<div class="r" style="left:456.2px;top:1104px;width:24px;height:24px;border-radius:12px;background:#a1a6e0"></div>
<div class="t" style="left:490.2px;top:1104.1px;font-size:24.2px;line-height:24.2px;color:#333333;font-weight:normal;font-family:'Liberation Sans', sans-serif;">P99</div>
<svg class="r" style="left:131px;top:1493.4px" width="1727" height="2"><line x1="0" y1="1" x2="1727" y2="1" stroke="#efefef" stroke-width="2" stroke-dasharray="8,8"/></svg>
<div class="t" style="right:3685.0px;top:1483.1px;font-size:23px;line-height:23px;color:#9ea3aa;font-weight:normal;font-family:'Liberation Sans', sans-serif;">0</div>
<svg class="r" style="left:131px;top:1434.7px" width="1727" height="2"><line x1="0" y1="1" x2="1727" y2="1" stroke="#efefef" stroke-width="2" stroke-dasharray="8,8"/></svg>
<div class="t" style="right:3685.0px;top:1424.3px;font-size:23px;line-height:23px;color:#9ea3aa;font-weight:normal;font-family:'Liberation Sans', sans-serif;">1,000</div>
<svg class="r" style="left:131px;top:1376.0px" width="1727" height="2"><line x1="0" y1="1" x2="1727" y2="1" stroke="#efefef" stroke-width="2" stroke-dasharray="8,8"/></svg>
<div class="t" style="right:3685.0px;top:1365.6px;font-size:23px;line-height:23px;color:#9ea3aa;font-weight:normal;font-family:'Liberation Sans', sans-serif;">2,000</div>
<svg class="r" style="left:131px;top:1317.2px" width="1727" height="2"><line x1="0" y1="1" x2="1727" y2="1" stroke="#efefef" stroke-width="2" stroke-dasharray="8,8"/></svg>
<div class="t" style="right:3685.0px;top:1306.9px;font-size:23px;line-height:23px;color:#9ea3aa;font-weight:normal;font-family:'Liberation Sans', sans-serif;">3,000</div>
<svg class="r" style="left:131px;top:1258.5px" width="1727" height="2"><line x1="0" y1="1" x2="1727" y2="1" stroke="#efefef" stroke-width="2" stroke-dasharray="8,8"/></svg>
<div class="t" style="right:3685.0px;top:1248.2px;font-size:23px;line-height:23px;color:#9ea3aa;font-weight:normal;font-family:'Liberation Sans', sans-serif;">4,000</div>
<svg class="r" style="left:131px;top:1199.8px" width="1727" height="2"><line x1="0" y1="1" x2="1727" y2="1" stroke="#efefef" stroke-width="2" stroke-dasharray="8,8"/></svg>
<div class="t" style="right:3685.0px;top:1189.5px;font-size:23px;line-height:23px;color:#9ea3aa;font-weight:normal;font-family:'Liberation Sans', sans-serif;">5,000</div>
<div class="r" style="left:185.0px;top:1494.5px;width:1.2px;height:8.0px;background:#e6e6e6;border-radius:0px;"></div>
<div class="t" style="left:185.5px;transform:translateX(-50%);top:1509.5px;font-size:23px;line-height:23px;color:#9ea3aa;font-weight:normal;font-family:'Liberation Sans', sans-serif;">20:24</div>
<div class="t" style="left:185.5px;transform:translateX(-50%);top:1532.0px;font-size:23px;line-height:23px;color:#9ea3aa;font-weight:normal;font-family:'Liberation Sans', sans-serif;">02–07</div>
<div class="r" style="left:292.7px;top:1494.5px;width:1.2px;height:8.0px;background:#e6e6e6;border-radius:0px;"></div>
<div class="t" style="left:293.2px;transform:translateX(-50%);top:1509.5px;font-size:23px;line-height:23px;color:#9ea3aa;font-weight:normal;font-family:'Liberation Sans', sans-serif;">20:25</div>
<div class="t" style="left:293.2px;transform:translateX(-50%);top:1532.0px;font-size:23px;line-height:23px;color:#9ea3aa;font-weight:normal;font-family:'Liberation Sans', sans-serif;">02–07</div>
<div class="r" style="left:400.4px;top:1494.5px;width:1.2px;height:8.0px;background:#e6e6e6;border-radius:0px;"></div>
<div class="t" style="left:400.9px;transform:translateX(-50%);top:1509.5px;font-size:23px;line-height:23px;color:#9ea3aa;font-weight:normal;font-family:'Liberation Sans', sans-serif;">20:26</div>
<div class="t" style="left:400.9px;transform:translateX(-50%);top:1532.0px;font-size:23px;line-height:23px;color:#9ea3aa;font-weight:normal;font-family:'Liberation Sans', sans-serif;">02–07</div>
<div class="r" style="left:508.1px;top:1494.5px;width:1.2px;height:8.0px;background:#e6e6e6;border-radius:0px;"></div>
<div class="t" style="left:508.6px;transform:translateX(-50%);top:1509.5px;font-size:23px;line-height:23px;color:#9ea3aa;font-weight:normal;font-family:'Liberation Sans', sans-serif;">20:27</div>
<div class="t" style="left:508.6px;transform:translateX(-50%);top:1532.0px;font-size:23px;line-height:23px;color:#9ea3aa;font-weight:normal;font-family:'Liberation Sans', sans-serif;">02–07</div>
<div class="r" style="left:615.8px;top:1494.5px;width:1.2px;height:8.0px;background:#e6e6e6;border-radius:0px;"></div>
<div class="t" style="left:616.3px;transform:translateX(-50%);top:1509.5px;font-size:23px;line-height:23px;color:#9ea3aa;font-weight:normal;font-family:'Liberation Sans', sans-serif;">20:28</div>
<div class="t" style="left:616.3px;transform:translateX(-50%);top:1532.0px;font-size:23px;line-height:23px;color:#9ea3aa;font-weight:normal;font-family:'Liberation Sans', sans-serif;">02–07</div>
<div class="r" style="left:723.5px;top:1494.5px;width:1.2px;height:8.0px;background:#e6e6e6;border-radius:0px;"></div>
<div class="t" style="left:724.0px;transform:translateX(-50%);top:1509.5px;font-size:23px;line-height:23px;color:#9ea3aa;font-weight:normal;font-family:'Liberation Sans', sans-serif;">20:29</div>
<div class="t" style="left:724.0px;transform:translateX(-50%);top:1532.0px;font-size:23px;line-height:23px;color:#9ea3aa;font-weight:normal;font-family:'Liberation Sans', sans-serif;">02–07</div>
<div class="r" style="left:831.2px;top:1494.5px;width:1.2px;height:8.0px;background:#e6e6e6;border-radius:0px;"></div>
<div class="t" style="left:831.7px;transform:translateX(-50%);top:1509.5px;font-size:23px;line-height:23px;color:#9ea3aa;font-weight:normal;font-family:'Liberation Sans', sans-serif;">20:30</div>
<div class="t" style="left:831.7px;transform:translateX(-50%);top:1532.0px;font-size:23px;line-height:23px;color:#9ea3aa;font-weight:normal;font-family:'Liberation Sans', sans-serif;">02–07</div>
<div class="r" style="left:938.9px;top:1494.5px;width:1.2px;height:8.0px;background:#e6e6e6;border-radius:0px;"></div>
<div class="t" style="left:939.4px;transform:translateX(-50%);top:1509.5px;font-size:23px;line-height:23px;color:#9ea3aa;font-weight:normal;font-family:'Liberation Sans', sans-serif;">20:31</div>
<div class="t" style="left:939.4px;transform:translateX(-50%);top:1532.0px;font-size:23px;line-height:23px;color:#9ea3aa;font-weight:normal;font-family:'Liberation Sans', sans-serif;">02–07</div>
<div class="r" style="left:1046.6px;top:1494.5px;width:1.2px;height:8.0px;background:#e6e6e6;border-radius:0px;"></div>
<div class="t" style="left:1047.1px;transform:translateX(-50%);top:1509.5px;font-size:23px;line-height:23px;color:#9ea3aa;font-weight:normal;font-family:'Liberation Sans', sans-serif;">20:32</div>
<div class="t" style="left:1047.1px;transform:translateX(-50%);top:1532.0px;font-size:23px;line-height:23px;color:#9ea3aa;font-weight:normal;font-family:'Liberation Sans', sans-serif;">02–07</div>
<div class="r" style="left:1154.3px;top:1494.5px;width:1.2px;height:8.0px;background:#e6e6e6;border-radius:0px;"></div>
<div class="t" style="left:1154.8px;transform:translateX(-50%);top:1509.5px;font-size:23px;line-height:23px;color:#9ea3aa;font-weight:normal;font-family:'Liberation Sans', sans-serif;">20:33</div>
<div class="t" style="left:1154.8px;transform:translateX(-50%);top:1532.0px;font-size:23px;line-height:23px;color:#9ea3aa;font-weight:normal;font-family:'Liberation Sans', sans-serif;">02–07</div>
<div class="r" style="left:1262.0px;top:1494.5px;width:1.2px;height:8.0px;background:#e6e6e6;border-radius:0px;"></div>
<div class="t" style="left:1262.5px;transform:translateX(-50%);top:1509.5px;font-size:23px;line-height:23px;color:#9ea3aa;font-weight:normal;font-family:'Liberation Sans', sans-serif;">20:34</div>
<div class="t" style="left:1262.5px;transform:translateX(-50%);top:1532.0px;font-size:23px;line-height:23px;color:#9ea3aa;font-weight:normal;font-family:'Liberation Sans', sans-serif;">02–07</div>
<div class="r" style="left:1369.7px;top:1494.5px;width:1.2px;height:8.0px;background:#e6e6e6;border-radius:0px;"></div>
<div class="t" style="left:1370.2px;transform:translateX(-50%);top:1509.5px;font-size:23px;line-height:23px;color:#9ea3aa;font-weight:normal;font-family:'Liberation Sans', sans-serif;">20:35</div>
<div class="t" style="left:1370.2px;transform:translateX(-50%);top:1532.0px;font-size:23px;line-height:23px;color:#9ea3aa;font-weight:normal;font-family:'Liberation Sans', sans-serif;">02–07</div>
<div class="r" style="left:1477.4px;top:1494.5px;width:1.2px;height:8.0px;background:#e6e6e6;border-radius:0px;"></div>
<div class="t" style="left:1477.9px;transform:translateX(-50%);top:1509.5px;font-size:23px;line-height:23px;color:#9ea3aa;font-weight:normal;font-family:'Liberation Sans', sans-serif;">20:36</div>
<div class="t" style="left:1477.9px;transform:translateX(-50%);top:1532.0px;font-size:23px;line-height:23px;color:#9ea3aa;font-weight:normal;font-family:'Liberation Sans', sans-serif;">02–07</div>
<div class="r" style="left:1585.1px;top:1494.5px;width:1.2px;height:8.0px;background:#e6e6e6;border-radius:0px;"></div>
<div class="t" style="left:1585.6px;transform:translateX(-50%);top:1509.5px;font-size:23px;line-height:23px;color:#9ea3aa;font-weight:normal;font-family:'Liberation Sans', sans-serif;">20:37</div>
<div class="t" style="left:1585.6px;transform:translateX(-50%);top:1532.0px;font-size:23px;line-height:23px;color:#9ea3aa;font-weight:normal;font-family:'Liberation Sans', sans-serif;">02–07</div>
<div class="r" style="left:1692.8px;top:1494.5px;width:1.2px;height:8.0px;background:#e6e6e6;border-radius:0px;"></div>
<div class="t" style="left:1693.3px;transform:translateX(-50%);top:1509.5px;font-size:23px;line-height:23px;color:#9ea3aa;font-weight:normal;font-family:'Liberation Sans', sans-serif;">20:38</div>
<div class="t" style="left:1693.3px;transform:translateX(-50%);top:1532.0px;font-size:23px;line-height:23px;color:#9ea3aa;font-weight:normal;font-family:'Liberation Sans', sans-serif;">02–07</div>
<div class="r" style="left:1800.5px;top:1494.5px;width:1.2px;height:8.0px;background:#e6e6e6;border-radius:0px;"></div>
<div class="t" style="left:1801.0px;transform:translateX(-50%);top:1509.5px;font-size:23px;line-height:23px;color:#9ea3aa;font-weight:normal;font-family:'Liberation Sans', sans-serif;">20:39</div>
<div class="t" style="left:1801.0px;transform:translateX(-50%);top:1532.0px;font-size:23px;line-height:23px;color:#9ea3aa;font-weight:normal;font-family:'Liberation Sans', sans-serif;">02–07</div>
<svg class="r" style="left:0;top:0" width="1900" height="1600"><polyline points="185.5,1494.4 293.2,1494.4 400.9,1494.4 508.6,1492.6 616.3,1459.8 724.0,1494.4 831.7,1494.4 939.4,1494.4 1047.1,1481.4 1154.8,1454.0 1262.5,1494.4 1370.2,1494.4 1477.9,1459.4 1585.6,1494.4 1693.3,1494.4 1801.0,1494.4" fill="none" stroke="#3ba1e6" stroke-width="2.5" stroke-linejoin="round"/><polyline points="185.5,1366.0 293.2,1494.4 400.9,1355.8 508.6,1349.0 616.3,1350.4 724.0,1493.2 831.7,1494.4 939.4,1360.3 1047.1,1349.0 1154.8,1348.5 1262.5,1494.1 1370.2,1494.1 1477.9,1356.3 1585.6,1357.9 1693.3,1373.4 1801.0,1494.4" fill="none" stroke="#3dbab1" stroke-width="2.5" stroke-linejoin="round"/><polyline points="185.5,1287.5 293.2,1493.2 400.9,1301.0 508.6,1282.0 616.3,1291.3 724.0,1488.5 831.7,1493.8 939.4,1294.3 1047.1,1289.5 1154.8,1279.7 1262.5,1492.6 1370.2,1492.6 1477.9,1305.0 1585.6,1285.8 1693.3,1310.7 1801.0,1494.4" fill="none" stroke="#fcc45c" stroke-width="2.5" stroke-linejoin="round"/><polyline points="185.5,1256.0 293.2,1488.9 400.9,1265.0 508.6,1252.0 616.3,1252.0 724.0,1429.2 831.7,1488.9 939.4,1248.7 1047.1,1255.3 1154.8,1245.5 1262.5,1489.1 1370.2,1489.1 1477.9,1262.1 1585.6,1240.6 1693.3,1272.4 1801.0,1494.4" fill="none" stroke="#ef5f77" stroke-width="2.5" stroke-linejoin="round"/><polyline points="185.5,1218.4 293.2,1471.9 400.9,1210.5 508.6,1209.4 616.3,1211.0 724.0,1284.8 831.7,1450.7 939.4,1212.5 1047.1,1214.5 1154.8,1214.1 1262.5,1400.7 1370.2,1459.0 1477.9,1214.1 1585.6,1212.5 1693.3,1225.5 1801.0,1494.4" fill="none" stroke="#a1a6e0" stroke-width="2.5" stroke-linejoin="round"/></svg>
<div class="t" style="right:1784.4px;top:1473.8px;font-size:22.7px;line-height:22.7px;color:#9ea3aa;font-weight:normal;font-family:'Liberation Sans', sans-serif;">0</div>
<div class="t" style="right:1784.4px;top:1439.9px;font-size:22.7px;line-height:22.7px;color:#9ea3aa;font-weight:normal;font-family:'Liberation Sans', sans-serif;">200</div>
<div class="t" style="right:1784.4px;top:1405.9px;font-size:22.7px;line-height:22.7px;color:#9ea3aa;font-weight:normal;font-family:'Liberation Sans', sans-serif;">400</div>
<div class="t" style="right:1784.4px;top:1371.9px;font-size:22.7px;line-height:22.7px;color:#9ea3aa;font-weight:normal;font-family:'Liberation Sans', sans-serif;">600</div>
<div class="t" style="right:1784.4px;top:1338.0px;font-size:22.7px;line-height:22.7px;color:#9ea3aa;font-weight:normal;font-family:'Liberation Sans', sans-serif;">800</div>
<div class="t" style="right:1784.4px;top:1304.0px;font-size:22.7px;line-height:22.7px;color:#9ea3aa;font-weight:normal;font-family:'Liberation Sans', sans-serif;">1000</div>
<div class="t" style="right:1784.4px;top:1270.1px;font-size:22.7px;line-height:22.7px;color:#9ea3aa;font-weight:normal;font-family:'Liberation Sans', sans-serif;">1200</div>
<div class="t" style="right:1784.4px;top:1236.1px;font-size:22.7px;line-height:22.7px;color:#9ea3aa;font-weight:normal;font-family:'Liberation Sans', sans-serif;">1400</div>
<div class="t" style="right:1784.4px;top:1202.1px;font-size:22.7px;line-height:22.7px;color:#9ea3aa;font-weight:normal;font-family:'Liberation Sans', sans-serif;">1600</div>
<div class="t" style="right:1784.4px;top:1168.2px;font-size:22.7px;line-height:22.7px;color:#9ea3aa;font-weight:normal;font-family:'Liberation Sans', sans-serif;">1800</div>
<div class="t" style="right:1784.4px;top:1134.2px;font-size:22.7px;line-height:22.7px;color:#9ea3aa;font-weight:normal;font-family:'Liberation Sans', sans-serif;">2000</div>
<svg class="r" style="left:0;top:0" width="3800" height="1600"><rect x="2032.50" y="1476.42" width="106.53" height="17.28" fill="#e86767"/><rect x="2032.50" y="1459.44" width="106.53" height="17.28" fill="#fbeeee"/><rect x="2032.50" y="1442.46" width="106.53" height="17.28" fill="#fbeeee"/><rect x="2032.50" y="1425.48" width="106.53" height="17.28" fill="#fbeeee"/><rect x="2032.50" y="1408.50" width="106.53" height="17.28" fill="#fbeeee"/><rect x="2032.50" y="1391.52" width="106.53" height="17.28" fill="#fbeeee"/><rect x="2032.50" y="1374.54" width="106.53" height="17.28" fill="#fbeeee"/><rect x="2032.50" y="1357.56" width="106.53" height="17.28" fill="#fbeeee"/><rect x="2032.50" y="1323.60" width="106.53" height="17.28" fill="#fbeeee"/><rect x="2032.50" y="1306.62" width="106.53" height="17.28" fill="#fbeeee"/><rect x="2032.50" y="1289.64" width="106.53" height="17.28" fill="#fbeeee"/><rect x="2032.50" y="1272.66" width="106.53" height="17.28" fill="#fbeeee"/><rect x="2032.50" y="1255.68" width="106.53" height="17.28" fill="#fbeeee"/><rect x="2032.50" y="1238.70" width="106.53" height="17.28" fill="#fbeeee"/><rect x="2032.50" y="1221.72" width="106.53" height="17.28" fill="#fbeeee"/><rect x="2032.50" y="1204.74" width="106.53" height="17.28" fill="#fbeeee"/><rect x="2032.50" y="1187.76" width="106.53" height="17.28" fill="#fbeeee"/><rect x="2032.50" y="1170.78" width="106.53" height="17.28" fill="#fbeeee"/><rect x="2032.50" y="1153.80" width="106.53" height="17.28" fill="#fbeeee"/><rect x="2032.50" y="1136.82" width="106.53" height="17.28" fill="#f7c6c8"/><rect x="2138.73" y="1476.42" width="106.53" height="17.28" fill="#a51616"/><rect x="2138.73" y="1459.44" width="106.53" height="17.28" fill="#fbeeee"/><rect x="2138.73" y="1425.48" width="106.53" height="17.28" fill="#fbeeee"/><rect x="2138.73" y="1408.50" width="106.53" height="17.28" fill="#fbeeee"/><rect x="2138.73" y="1391.52" width="106.53" height="17.28" fill="#fbeeee"/><rect x="2138.73" y="1374.54" width="106.53" height="17.28" fill="#fbeeee"/><rect x="2138.73" y="1340.58" width="106.53" height="17.28" fill="#fbeeee"/><rect x="2138.73" y="1323.60" width="106.53" height="17.28" fill="#fbeeee"/><rect x="2138.73" y="1306.62" width="106.53" height="17.28" fill="#fbeeee"/><rect x="2138.73" y="1255.68" width="106.53" height="17.28" fill="#fbeeee"/><rect x="2244.96" y="1476.42" width="106.53" height="17.28" fill="#f09595"/><rect x="2244.96" y="1459.44" width="106.53" height="17.28" fill="#fbeeee"/><rect x="2244.96" y="1442.46" width="106.53" height="17.28" fill="#fbeeee"/><rect x="2244.96" y="1425.48" width="106.53" height="17.28" fill="#fbeeee"/><rect x="2244.96" y="1408.50" width="106.53" height="17.28" fill="#fbeeee"/><rect x="2244.96" y="1391.52" width="106.53" height="17.28" fill="#fbeeee"/><rect x="2244.96" y="1374.54" width="106.53" height="17.28" fill="#fbeeee"/><rect x="2244.96" y="1357.56" width="106.53" height="17.28" fill="#fbeeee"/><rect x="2244.96" y="1340.58" width="106.53" height="17.28" fill="#fbeeee"/><rect x="2244.96" y="1323.60" width="106.53" height="17.28" fill="#fbeeee"/><rect x="2244.96" y="1306.62" width="106.53" height="17.28" fill="#fbeeee"/><rect x="2244.96" y="1289.64" width="106.53" height="17.28" fill="#fbeeee"/><rect x="2244.96" y="1272.66" width="106.53" height="17.28" fill="#fbeeee"/><rect x="2244.96" y="1255.68" width="106.53" height="17.28" fill="#fbeeee"/><rect x="2244.96" y="1238.70" width="106.53" height="17.28" fill="#fbeeee"/><rect x="2244.96" y="1221.72" width="106.53" height="17.28" fill="#fbeeee"/><rect x="2244.96" y="1204.74" width="106.53" height="17.28" fill="#fbeeee"/><rect x="2244.96" y="1187.76" width="106.53" height="17.28" fill="#fbeeee"/><rect x="2244.96" y="1170.78" width="106.53" height="17.28" fill="#fbeeee"/><rect x="2244.96" y="1153.80" width="106.53" height="17.28" fill="#fbeeee"/><rect x="2244.96" y="1136.82" width="106.53" height="17.28" fill="#f7c6c8"/><rect x="2351.19" y="1476.42" width="106.53" height="17.28" fill="#f4a6a6"/><rect x="2351.19" y="1459.44" width="106.53" height="17.28" fill="#fbeeee"/><rect x="2351.19" y="1425.48" width="106.53" height="17.28" fill="#fbeeee"/><rect x="2351.19" y="1408.50" width="106.53" height="17.28" fill="#fbeeee"/><rect x="2351.19" y="1391.52" width="106.53" height="17.28" fill="#fbeeee"/><rect x="2351.19" y="1374.54" width="106.53" height="17.28" fill="#fbeeee"/><rect x="2351.19" y="1357.56" width="106.53" height="17.28" fill="#fbeeee"/><rect x="2351.19" y="1340.58" width="106.53" height="17.28" fill="#fbeeee"/><rect x="2351.19" y="1323.60" width="106.53" height="17.28" fill="#fbeeee"/><rect x="2351.19" y="1306.62" width="106.53" height="17.28" fill="#fbeeee"/><rect x="2351.19" y="1289.64" width="106.53" height="17.28" fill="#fbeeee"/><rect x="2351.19" y="1272.66" width="106.53" height="17.28" fill="#fbeeee"/><rect x="2351.19" y="1255.68" width="106.53" height="17.28" fill="#fbeeee"/><rect x="2351.19" y="1238.70" width="106.53" height="17.28" fill="#fbeeee"/><rect x="2351.19" y="1221.72" width="106.53" height="17.28" fill="#fbeeee"/><rect x="2351.19" y="1204.74" width="106.53" height="17.28" fill="#fbeeee"/><rect x="2351.19" y="1187.76" width="106.53" height="17.28" fill="#fbeeee"/><rect x="2351.19" y="1170.78" width="106.53" height="17.28" fill="#fbeeee"/><rect x="2351.19" y="1153.80" width="106.53" height="17.28" fill="#fbeeee"/><rect x="2351.19" y="1136.82" width="106.53" height="17.28" fill="#f7c6c8"/><rect x="2457.42" y="1476.42" width="106.53" height="17.28" fill="#f6b5b5"/><rect x="2457.42" y="1459.44" width="106.53" height="17.28" fill="#fbeeee"/><rect x="2457.42" y="1442.46" width="106.53" height="17.28" fill="#fbeeee"/><rect x="2457.42" y="1425.48" width="106.53" height="17.28" fill="#fbeeee"/><rect x="2457.42" y="1408.50" width="106.53" height="17.28" fill="#fbeeee"/><rect x="2457.42" y="1391.52" width="106.53" height="17.28" fill="#fbeeee"/><rect x="2457.42" y="1374.54" width="106.53" height="17.28" fill="#fbeeee"/><rect x="2457.42" y="1357.56" width="106.53" height="17.28" fill="#fbeeee"/><rect x="2457.42" y="1340.58" width="106.53" height="17.28" fill="#fbeeee"/><rect x="2457.42" y="1323.60" width="106.53" height="17.28" fill="#fbeeee"/><rect x="2457.42" y="1306.62" width="106.53" height="17.28" fill="#fbeeee"/><rect x="2457.42" y="1289.64" width="106.53" height="17.28" fill="#fbeeee"/><rect x="2457.42" y="1272.66" width="106.53" height="17.28" fill="#fbeeee"/><rect x="2457.42" y="1255.68" width="106.53" height="17.28" fill="#fbeeee"/><rect x="2457.42" y="1238.70" width="106.53" height="17.28" fill="#fbeeee"/><rect x="2457.42" y="1221.72" width="106.53" height="17.28" fill="#fbeeee"/><rect x="2457.42" y="1204.74" width="106.53" height="17.28" fill="#fbeeee"/><rect x="2457.42" y="1187.76" width="106.53" height="17.28" fill="#fbeeee"/><rect x="2457.42" y="1170.78" width="106.53" height="17.28" fill="#fbeeee"/><rect x="2457.42" y="1153.80" width="106.53" height="17.28" fill="#fbeeee"/><rect x="2457.42" y="1136.82" width="106.53" height="17.28" fill="#f7c6c8"/><rect x="2563.65" y="1476.42" width="106.53" height="17.28" fill="#6e0e0e"/><rect x="2563.65" y="1459.44" width="106.53" height="17.28" fill="#fbeeee"/><rect x="2563.65" y="1442.46" width="106.53" height="17.28" fill="#fbeeee"/><rect x="2563.65" y="1425.48" width="106.53" height="17.28" fill="#fbeeee"/><rect x="2563.65" y="1408.50" width="106.53" height="17.28" fill="#fbeeee"/><rect x="2563.65" y="1391.52" width="106.53" height="17.28" fill="#fbeeee"/><rect x="2563.65" y="1374.54" width="106.53" height="17.28" fill="#fbeeee"/><rect x="2563.65" y="1357.56" width="106.53" height="17.28" fill="#fbeeee"/><rect x="2563.65" y="1340.58" width="106.53" height="17.28" fill="#fbeeee"/><rect x="2563.65" y="1323.60" width="106.53" height="17.28" fill="#fbeeee"/><rect x="2563.65" y="1306.62" width="106.53" height="17.28" fill="#fbeeee"/><rect x="2563.65" y="1289.64" width="106.53" height="17.28" fill="#fbeeee"/><rect x="2563.65" y="1255.68" width="106.53" height="17.28" fill="#fbeeee"/><rect x="2563.65" y="1238.70" width="106.53" height="17.28" fill="#fbeeee"/><rect x="2563.65" y="1221.72" width="106.53" height="17.28" fill="#fbeeee"/><rect x="2563.65" y="1187.76" width="106.53" height="17.28" fill="#fbeeee"/><rect x="2563.65" y="1170.78" width="106.53" height="17.28" fill="#fbeeee"/><rect x="2563.65" y="1153.80" width="106.53" height="17.28" fill="#fbeeee"/><rect x="2563.65" y="1136.82" width="106.53" height="17.28" fill="#fbeeee"/><rect x="2669.88" y="1476.42" width="106.53" height="17.28" fill="#6e0e0e"/><rect x="2669.88" y="1459.44" width="106.53" height="17.28" fill="#fbeeee"/><rect x="2669.88" y="1442.46" width="106.53" height="17.28" fill="#fbeeee"/><rect x="2669.88" y="1425.48" width="106.53" height="17.28" fill="#fbeeee"/><rect x="2669.88" y="1408.50" width="106.53" height="17.28" fill="#fbeeee"/><rect x="2669.88" y="1391.52" width="106.53" height="17.28" fill="#fbeeee"/><rect x="2669.88" y="1374.54" width="106.53" height="17.28" fill="#fbeeee"/><rect x="2669.88" y="1357.56" width="106.53" height="17.28" fill="#fbeeee"/><rect x="2669.88" y="1340.58" width="106.53" height="17.28" fill="#fbeeee"/><rect x="2669.88" y="1323.60" width="106.53" height="17.28" fill="#fbeeee"/><rect x="2669.88" y="1306.62" width="106.53" height="17.28" fill="#fbeeee"/><rect x="2669.88" y="1289.64" width="106.53" height="17.28" fill="#fbeeee"/><rect x="2669.88" y="1272.66" width="106.53" height="17.28" fill="#fbeeee"/><rect x="2669.88" y="1187.76" width="106.53" height="17.28" fill="#fbeeee"/><rect x="2669.88" y="1170.78" width="106.53" height="17.28" fill="#fbeeee"/><rect x="2669.88" y="1153.80" width="106.53" height="17.28" fill="#fbeeee"/><rect x="2669.88" y="1136.82" width="106.53" height="17.28" fill="#fbeeee"/><rect x="2776.11" y="1476.42" width="106.53" height="17.28" fill="#f09595"/><rect x="2776.11" y="1459.44" width="106.53" height="17.28" fill="#fbeeee"/><rect x="2776.11" y="1442.46" width="106.53" height="17.28" fill="#fbeeee"/><rect x="2776.11" y="1425.48" width="106.53" height="17.28" fill="#fbeeee"/><rect x="2776.11" y="1408.50" width="106.53" height="17.28" fill="#fbeeee"/><rect x="2776.11" y="1391.52" width="106.53" height="17.28" fill="#fbeeee"/><rect x="2776.11" y="1374.54" width="106.53" height="17.28" fill="#fbeeee"/><rect x="2776.11" y="1357.56" width="106.53" height="17.28" fill="#fbeeee"/><rect x="2776.11" y="1340.58" width="106.53" height="17.28" fill="#fbeeee"/><rect x="2776.11" y="1323.60" width="106.53" height="17.28" fill="#fbeeee"/><rect x="2776.11" y="1306.62" width="106.53" height="17.28" fill="#fbeeee"/><rect x="2776.11" y="1289.64" width="106.53" height="17.28" fill="#fbeeee"/><rect x="2776.11" y="1272.66" width="106.53" height="17.28" fill="#fbeeee"/><rect x="2776.11" y="1255.68" width="106.53" height="17.28" fill="#fbeeee"/><rect x="2776.11" y="1238.70" width="106.53" height="17.28" fill="#fbeeee"/><rect x="2776.11" y="1221.72" width="106.53" height="17.28" fill="#fbeeee"/><rect x="2776.11" y="1204.74" width="106.53" height="17.28" fill="#fbeeee"/><rect x="2776.11" y="1187.76" width="106.53" height="17.28" fill="#fbeeee"/><rect x="2776.11" y="1170.78" width="106.53" height="17.28" fill="#fbeeee"/><rect x="2776.11" y="1153.80" width="106.53" height="17.28" fill="#fbeeee"/><rect x="2776.11" y="1136.82" width="106.53" height="17.28" fill="#f7c6c8"/><rect x="2882.34" y="1476.42" width="106.53" height="17.28" fill="#f4a6a6"/><rect x="2882.34" y="1459.44" width="106.53" height="17.28" fill="#fbeeee"/><rect x="2882.34" y="1442.46" width="106.53" height="17.28" fill="#fbeeee"/><rect x="2882.34" y="1425.48" width="106.53" height="17.28" fill="#fbeeee"/><rect x="2882.34" y="1408.50" width="106.53" height="17.28" fill="#fbeeee"/><rect x="2882.34" y="1391.52" width="106.53" height="17.28" fill="#fbeeee"/><rect x="2882.34" y="1374.54" width="106.53" height="17.28" fill="#fbeeee"/><rect x="2882.34" y="1357.56" width="106.53" height="17.28" fill="#fbeeee"/><rect x="2882.34" y="1340.58" width="106.53" height="17.28" fill="#fbeeee"/><rect x="2882.34" y="1323.60" width="106.53" height="17.28" fill="#fbeeee"/><rect x="2882.34" y="1306.62" width="106.53" height="17.28" fill="#fbeeee"/><rect x="2882.34" y="1289.64" width="106.53" height="17.28" fill="#fbeeee"/><rect x="2882.34" y="1272.66" width="106.53" height="17.28" fill="#fbeeee"/><rect x="2882.34" y="1255.68" width="106.53" height="17.28" fill="#fbeeee"/><rect x="2882.34" y="1238.70" width="106.53" height="17.28" fill="#fbeeee"/><rect x="2882.34" y="1221.72" width="106.53" height="17.28" fill="#fbeeee"/><rect x="2882.34" y="1204.74" width="106.53" height="17.28" fill="#fbeeee"/><rect x="2882.34" y="1187.76" width="106.53" height="17.28" fill="#fbeeee"/><rect x="2882.34" y="1170.78" width="106.53" height="17.28" fill="#fbeeee"/><rect x="2882.34" y="1153.80" width="106.53" height="17.28" fill="#fbeeee"/><rect x="2882.34" y="1136.82" width="106.53" height="17.28" fill="#f7c6c8"/><rect x="2988.57" y="1476.42" width="106.53" height="17.28" fill="#e86767"/><rect x="2988.57" y="1459.44" width="106.53" height="17.28" fill="#fbeeee"/><rect x="2988.57" y="1442.46" width="106.53" height="17.28" fill="#fbeeee"/><rect x="2988.57" y="1425.48" width="106.53" height="17.28" fill="#fbeeee"/><rect x="2988.57" y="1408.50" width="106.53" height="17.28" fill="#fbeeee"/><rect x="2988.57" y="1391.52" width="106.53" height="17.28" fill="#fbeeee"/><rect x="2988.57" y="1374.54" width="106.53" height="17.28" fill="#fbeeee"/><rect x="2988.57" y="1357.56" width="106.53" height="17.28" fill="#fbeeee"/><rect x="2988.57" y="1340.58" width="106.53" height="17.28" fill="#fbeeee"/><rect x="2988.57" y="1323.60" width="106.53" height="17.28" fill="#fbeeee"/><rect x="2988.57" y="1306.62" width="106.53" height="17.28" fill="#fbeeee"/><rect x="2988.57" y="1289.64" width="106.53" height="17.28" fill="#fbeeee"/><rect x="2988.57" y="1272.66" width="106.53" height="17.28" fill="#fbeeee"/><rect x="2988.57" y="1255.68" width="106.53" height="17.28" fill="#fbeeee"/><rect x="2988.57" y="1238.70" width="106.53" height="17.28" fill="#fbeeee"/><rect x="2988.57" y="1221.72" width="106.53" height="17.28" fill="#fbeeee"/><rect x="2988.57" y="1204.74" width="106.53" height="17.28" fill="#fbeeee"/><rect x="2988.57" y="1187.76" width="106.53" height="17.28" fill="#fbeeee"/><rect x="2988.57" y="1170.78" width="106.53" height="17.28" fill="#fbeeee"/><rect x="2988.57" y="1153.80" width="106.53" height="17.28" fill="#fbeeee"/><rect x="2988.57" y="1136.82" width="106.53" height="17.28" fill="#f7c6c8"/><rect x="3094.80" y="1476.42" width="106.53" height="17.28" fill="#8b1414"/><rect x="3094.80" y="1459.44" width="106.53" height="17.28" fill="#fbeeee"/><rect x="3094.80" y="1442.46" width="106.53" height="17.28" fill="#fbeeee"/><rect x="3094.80" y="1425.48" width="106.53" height="17.28" fill="#fbeeee"/><rect x="3094.80" y="1408.50" width="106.53" height="17.28" fill="#fbeeee"/><rect x="3094.80" y="1374.54" width="106.53" height="17.28" fill="#fbeeee"/><rect x="3094.80" y="1357.56" width="106.53" height="17.28" fill="#fbeeee"/><rect x="3094.80" y="1340.58" width="106.53" height="17.28" fill="#fbeeee"/><rect x="3094.80" y="1238.70" width="106.53" height="17.28" fill="#fbeeee"/><rect x="3094.80" y="1221.72" width="106.53" height="17.28" fill="#fbeeee"/><rect x="3094.80" y="1187.76" width="106.53" height="17.28" fill="#fbeeee"/><rect x="3094.80" y="1153.80" width="106.53" height="17.28" fill="#fbeeee"/><rect x="3094.80" y="1136.82" width="106.53" height="17.28" fill="#fbeeee"/><rect x="3201.03" y="1476.42" width="106.53" height="17.28" fill="#6e0e0e"/><rect x="3201.03" y="1459.44" width="106.53" height="17.28" fill="#fbeeee"/><rect x="3201.03" y="1442.46" width="106.53" height="17.28" fill="#fbeeee"/><rect x="3201.03" y="1425.48" width="106.53" height="17.28" fill="#fbeeee"/><rect x="3201.03" y="1408.50" width="106.53" height="17.28" fill="#fbeeee"/><rect x="3201.03" y="1391.52" width="106.53" height="17.28" fill="#fbeeee"/><rect x="3201.03" y="1374.54" width="106.53" height="17.28" fill="#fbeeee"/><rect x="3201.03" y="1357.56" width="106.53" height="17.28" fill="#fbeeee"/><rect x="3201.03" y="1340.58" width="106.53" height="17.28" fill="#fbeeee"/><rect x="3201.03" y="1323.60" width="106.53" height="17.28" fill="#fbeeee"/><rect x="3201.03" y="1306.62" width="106.53" height="17.28" fill="#fbeeee"/><rect x="3201.03" y="1289.64" width="106.53" height="17.28" fill="#fbeeee"/><rect x="3201.03" y="1272.66" width="106.53" height="17.28" fill="#fbeeee"/><rect x="3307.26" y="1476.42" width="106.53" height="17.28" fill="#f6b5b5"/><rect x="3307.26" y="1459.44" width="106.53" height="17.28" fill="#fbeeee"/><rect x="3307.26" y="1425.48" width="106.53" height="17.28" fill="#fbeeee"/><rect x="3307.26" y="1408.50" width="106.53" height="17.28" fill="#fbeeee"/><rect x="3307.26" y="1391.52" width="106.53" height="17.28" fill="#fbeeee"/><rect x="3307.26" y="1374.54" width="106.53" height="17.28" fill="#fbeeee"/><rect x="3307.26" y="1357.56" width="106.53" height="17.28" fill="#fbeeee"/><rect x="3307.26" y="1340.58" width="106.53" height="17.28" fill="#fbeeee"/><rect x="3307.26" y="1323.60" width="106.53" height="17.28" fill="#fbeeee"/><rect x="3307.26" y="1306.62" width="106.53" height="17.28" fill="#fbeeee"/><rect x="3307.26" y="1289.64" width="106.53" height="17.28" fill="#fbeeee"/><rect x="3307.26" y="1272.66" width="106.53" height="17.28" fill="#fbeeee"/><rect x="3307.26" y="1255.68" width="106.53" height="17.28" fill="#fbeeee"/><rect x="3307.26" y="1238.70" width="106.53" height="17.28" fill="#fbeeee"/><rect x="3307.26" y="1221.72" width="106.53" height="17.28" fill="#fbeeee"/><rect x="3307.26" y="1204.74" width="106.53" height="17.28" fill="#fbeeee"/><rect x="3307.26" y="1187.76" width="106.53" height="17.28" fill="#fbeeee"/><rect x="3307.26" y="1170.78" width="106.53" height="17.28" fill="#fbeeee"/><rect x="3307.26" y="1153.80" width="106.53" height="17.28" fill="#fbeeee"/><rect x="3307.26" y="1136.82" width="106.53" height="17.28" fill="#f7c6c8"/><rect x="3413.49" y="1476.42" width="106.53" height="17.28" fill="#f09595"/><rect x="3413.49" y="1459.44" width="106.53" height="17.28" fill="#fbeeee"/><rect x="3413.49" y="1425.48" width="106.53" height="17.28" fill="#fbeeee"/><rect x="3413.49" y="1408.50" width="106.53" height="17.28" fill="#fbeeee"/><rect x="3413.49" y="1391.52" width="106.53" height="17.28" fill="#fbeeee"/><rect x="3413.49" y="1374.54" width="106.53" height="17.28" fill="#fbeeee"/><rect x="3413.49" y="1357.56" width="106.53" height="17.28" fill="#fbeeee"/><rect x="3413.49" y="1340.58" width="106.53" height="17.28" fill="#fbeeee"/><rect x="3413.49" y="1323.60" width="106.53" height="17.28" fill="#fbeeee"/><rect x="3413.49" y="1306.62" width="106.53" height="17.28" fill="#fbeeee"/><rect x="3413.49" y="1289.64" width="106.53" height="17.28" fill="#fbeeee"/><rect x="3413.49" y="1272.66" width="106.53" height="17.28" fill="#fbeeee"/><rect x="3413.49" y="1255.68" width="106.53" height="17.28" fill="#fbeeee"/><rect x="3413.49" y="1238.70" width="106.53" height="17.28" fill="#fbeeee"/><rect x="3413.49" y="1221.72" width="106.53" height="17.28" fill="#fbeeee"/><rect x="3413.49" y="1204.74" width="106.53" height="17.28" fill="#fbeeee"/><rect x="3413.49" y="1187.76" width="106.53" height="17.28" fill="#fbeeee"/><rect x="3413.49" y="1170.78" width="106.53" height="17.28" fill="#fbeeee"/><rect x="3413.49" y="1153.80" width="106.53" height="17.28" fill="#fbeeee"/><rect x="3413.49" y="1136.82" width="106.53" height="17.28" fill="#f7c6c8"/><rect x="3519.72" y="1476.42" width="106.53" height="17.28" fill="#e86767"/><rect x="3519.72" y="1459.44" width="106.53" height="17.28" fill="#fbeeee"/><rect x="3519.72" y="1442.46" width="106.53" height="17.28" fill="#fbeeee"/><rect x="3519.72" y="1425.48" width="106.53" height="17.28" fill="#fbeeee"/><rect x="3519.72" y="1408.50" width="106.53" height="17.28" fill="#fbeeee"/><rect x="3519.72" y="1391.52" width="106.53" height="17.28" fill="#fbeeee"/><rect x="3519.72" y="1374.54" width="106.53" height="17.28" fill="#fbeeee"/><rect x="3519.72" y="1357.56" width="106.53" height="17.28" fill="#fbeeee"/><rect x="3519.72" y="1340.58" width="106.53" height="17.28" fill="#fbeeee"/><rect x="3519.72" y="1323.60" width="106.53" height="17.28" fill="#fbeeee"/><rect x="3519.72" y="1306.62" width="106.53" height="17.28" fill="#fbeeee"/><rect x="3519.72" y="1289.64" width="106.53" height="17.28" fill="#fbeeee"/><rect x="3519.72" y="1272.66" width="106.53" height="17.28" fill="#fbeeee"/><rect x="3519.72" y="1255.68" width="106.53" height="17.28" fill="#fbeeee"/><rect x="3519.72" y="1238.70" width="106.53" height="17.28" fill="#fbeeee"/><rect x="3519.72" y="1221.72" width="106.53" height="17.28" fill="#fbeeee"/><rect x="3519.72" y="1204.74" width="106.53" height="17.28" fill="#fbeeee"/><rect x="3519.72" y="1187.76" width="106.53" height="17.28" fill="#fbeeee"/><rect x="3519.72" y="1170.78" width="106.53" height="17.28" fill="#fbeeee"/><rect x="3519.72" y="1153.80" width="106.53" height="17.28" fill="#fbeeee"/><rect x="3519.72" y="1136.82" width="106.53" height="17.28" fill="#f7c6c8"/></svg>
<div class="r" style="left:2085.1px;top:1493.5px;width:1.2px;height:8.0px;background:#d8d8d8;border-radius:0px;"></div>
<div class="t" style="left:2085.6px;transform:translateX(-50%);top:1509.5px;font-size:23px;line-height:23px;color:#9ea3aa;font-weight:normal;font-family:'Liberation Sans', sans-serif;">20:24</div>
<div class="t" style="left:2085.6px;transform:translateX(-50%);top:1532.0px;font-size:23px;line-height:23px;color:#9ea3aa;font-weight:normal;font-family:'Liberation Sans', sans-serif;">02–07</div>
<div class="r" style="left:2191.3px;top:1493.5px;width:1.2px;height:8.0px;background:#d8d8d8;border-radius:0px;"></div>
<div class="t" style="left:2191.8px;transform:translateX(-50%);top:1509.5px;font-size:23px;line-height:23px;color:#9ea3aa;font-weight:normal;font-family:'Liberation Sans', sans-serif;">20:25</div>
<div class="t" style="left:2191.8px;transform:translateX(-50%);top:1532.0px;font-size:23px;line-height:23px;color:#9ea3aa;font-weight:normal;font-family:'Liberation Sans', sans-serif;">02–07</div>
<div class="r" style="left:2297.6px;top:1493.5px;width:1.2px;height:8.0px;background:#d8d8d8;border-radius:0px;"></div>
<div class="t" style="left:2298.1px;transform:translateX(-50%);top:1509.5px;font-size:23px;line-height:23px;color:#9ea3aa;font-weight:normal;font-family:'Liberation Sans', sans-serif;">20:26</div>
<div class="t" style="left:2298.1px;transform:translateX(-50%);top:1532.0px;font-size:23px;line-height:23px;color:#9ea3aa;font-weight:normal;font-family:'Liberation Sans', sans-serif;">02–07</div>
<div class="r" style="left:2403.8px;top:1493.5px;width:1.2px;height:8.0px;background:#d8d8d8;border-radius:0px;"></div>
<div class="t" style="left:2404.3px;transform:translateX(-50%);top:1509.5px;font-size:23px;line-height:23px;color:#9ea3aa;font-weight:normal;font-family:'Liberation Sans', sans-serif;">20:27</div>
<div class="t" style="left:2404.3px;transform:translateX(-50%);top:1532.0px;font-size:23px;line-height:23px;color:#9ea3aa;font-weight:normal;font-family:'Liberation Sans', sans-serif;">02–07</div>
<div class="r" style="left:2510.0px;top:1493.5px;width:1.2px;height:8.0px;background:#d8d8d8;border-radius:0px;"></div>
<div class="t" style="left:2510.5px;transform:translateX(-50%);top:1509.5px;font-size:23px;line-height:23px;color:#9ea3aa;font-weight:normal;font-family:'Liberation Sans', sans-serif;">20:28</div>
<div class="t" style="left:2510.5px;transform:translateX(-50%);top:1532.0px;font-size:23px;line-height:23px;color:#9ea3aa;font-weight:normal;font-family:'Liberation Sans', sans-serif;">02–07</div>
<div class="r" style="left:2616.3px;top:1493.5px;width:1.2px;height:8.0px;background:#d8d8d8;border-radius:0px;"></div>
<div class="t" style="left:2616.8px;transform:translateX(-50%);top:1509.5px;font-size:23px;line-height:23px;color:#9ea3aa;font-weight:normal;font-family:'Liberation Sans', sans-serif;">20:29</div>
<div class="t" style="left:2616.8px;transform:translateX(-50%);top:1532.0px;font-size:23px;line-height:23px;color:#9ea3aa;font-weight:normal;font-family:'Liberation Sans', sans-serif;">02–07</div>
<div class="r" style="left:2722.5px;top:1493.5px;width:1.2px;height:8.0px;background:#d8d8d8;border-radius:0px;"></div>
<div class="t" style="left:2723.0px;transform:translateX(-50%);top:1509.5px;font-size:23px;line-height:23px;color:#9ea3aa;font-weight:normal;font-family:'Liberation Sans', sans-serif;">20:30</div>
<div class="t" style="left:2723.0px;transform:translateX(-50%);top:1532.0px;font-size:23px;line-height:23px;color:#9ea3aa;font-weight:normal;font-family:'Liberation Sans', sans-serif;">02–07</div>
<div class="r" style="left:2828.7px;top:1493.5px;width:1.2px;height:8.0px;background:#d8d8d8;border-radius:0px;"></div>
<div class="t" style="left:2829.2px;transform:translateX(-50%);top:1509.5px;font-size:23px;line-height:23px;color:#9ea3aa;font-weight:normal;font-family:'Liberation Sans', sans-serif;">20:31</div>
<div class="t" style="left:2829.2px;transform:translateX(-50%);top:1532.0px;font-size:23px;line-height:23px;color:#9ea3aa;font-weight:normal;font-family:'Liberation Sans', sans-serif;">02–07</div>
<div class="r" style="left:2935.0px;top:1493.5px;width:1.2px;height:8.0px;background:#d8d8d8;border-radius:0px;"></div>
<div class="t" style="left:2935.5px;transform:translateX(-50%);top:1509.5px;font-size:23px;line-height:23px;color:#9ea3aa;font-weight:normal;font-family:'Liberation Sans', sans-serif;">20:32</div>
<div class="t" style="left:2935.5px;transform:translateX(-50%);top:1532.0px;font-size:23px;line-height:23px;color:#9ea3aa;font-weight:normal;font-family:'Liberation Sans', sans-serif;">02–07</div>
<div class="r" style="left:3041.2px;top:1493.5px;width:1.2px;height:8.0px;background:#d8d8d8;border-radius:0px;"></div>
<div class="t" style="left:3041.7px;transform:translateX(-50%);top:1509.5px;font-size:23px;line-height:23px;color:#9ea3aa;font-weight:normal;font-family:'Liberation Sans', sans-serif;">20:33</div>
<div class="t" style="left:3041.7px;transform:translateX(-50%);top:1532.0px;font-size:23px;line-height:23px;color:#9ea3aa;font-weight:normal;font-family:'Liberation Sans', sans-serif;">02–07</div>
<div class="r" style="left:3147.4px;top:1493.5px;width:1.2px;height:8.0px;background:#d8d8d8;border-radius:0px;"></div>
<div class="t" style="left:3147.9px;transform:translateX(-50%);top:1509.5px;font-size:23px;line-height:23px;color:#9ea3aa;font-weight:normal;font-family:'Liberation Sans', sans-serif;">20:34</div>
<div class="t" style="left:3147.9px;transform:translateX(-50%);top:1532.0px;font-size:23px;line-height:23px;color:#9ea3aa;font-weight:normal;font-family:'Liberation Sans', sans-serif;">02–07</div>
<div class="r" style="left:3253.6px;top:1493.5px;width:1.2px;height:8.0px;background:#d8d8d8;border-radius:0px;"></div>
<div class="t" style="left:3254.1px;transform:translateX(-50%);top:1509.5px;font-size:23px;line-height:23px;color:#9ea3aa;font-weight:normal;font-family:'Liberation Sans', sans-serif;">20:35</div>
<div class="t" style="left:3254.1px;transform:translateX(-50%);top:1532.0px;font-size:23px;line-height:23px;color:#9ea3aa;font-weight:normal;font-family:'Liberation Sans', sans-serif;">02–07</div>
<div class="r" style="left:3359.9px;top:1493.5px;width:1.2px;height:8.0px;background:#d8d8d8;border-radius:0px;"></div>
<div class="t" style="left:3360.4px;transform:translateX(-50%);top:1509.5px;font-size:23px;line-height:23px;color:#9ea3aa;font-weight:normal;font-family:'Liberation Sans', sans-serif;">20:36</div>
<div class="t" style="left:3360.4px;transform:translateX(-50%);top:1532.0px;font-size:23px;line-height:23px;color:#9ea3aa;font-weight:normal;font-family:'Liberation Sans', sans-serif;">02–07</div>
<div class="r" style="left:3466.1px;top:1493.5px;width:1.2px;height:8.0px;background:#d8d8d8;border-radius:0px;"></div>
<div class="t" style="left:3466.6px;transform:translateX(-50%);top:1509.5px;font-size:23px;line-height:23px;color:#9ea3aa;font-weight:normal;font-family:'Liberation Sans', sans-serif;">20:37</div>
<div class="t" style="left:3466.6px;transform:translateX(-50%);top:1532.0px;font-size:23px;line-height:23px;color:#9ea3aa;font-weight:normal;font-family:'Liberation Sans', sans-serif;">02–07</div>
<div class="r" style="left:3572.3px;top:1493.5px;width:1.2px;height:8.0px;background:#d8d8d8;border-radius:0px;"></div>
<div class="t" style="left:3572.8px;transform:translateX(-50%);top:1509.5px;font-size:23px;line-height:23px;color:#9ea3aa;font-weight:normal;font-family:'Liberation Sans', sans-serif;">20:38</div>
<div class="t" style="left:3572.8px;transform:translateX(-50%);top:1532.0px;font-size:23px;line-height:23px;color:#9ea3aa;font-weight:normal;font-family:'Liberation Sans', sans-serif;">02–07</div>
<div class="r" style="left:3678.6px;top:1493.5px;width:1.2px;height:8.0px;background:#d8d8d8;border-radius:0px;"></div>
<div class="t" style="left:3679.1px;transform:translateX(-50%);top:1509.5px;font-size:23px;line-height:23px;color:#9ea3aa;font-weight:normal;font-family:'Liberation Sans', sans-serif;">20:39</div>
<div class="t" style="left:3679.1px;transform:translateX(-50%);top:1532.0px;font-size:23px;line-height:23px;color:#9ea3aa;font-weight:normal;font-family:'Liberation Sans', sans-serif;">02–07</div>
<div class="r" style="left:0.0px;top:1640.0px;width:3800.0px;height:2.0px;background:#e3e3e3;border-radius:0px;"></div>
<div class="r" style="left:0;top:1642px;width:3800px;height:58px;background:linear-gradient(#fcfcfc,#e7e7e9)"></div>
<div class="r" style="left:0;top:1642px;width:3800px;height:58px;background:linear-gradient(90deg,rgba(255,255,255,1) 0px,rgba(255,255,255,0) 260px,rgba(255,255,255,0) 3520px,rgba(255,255,255,1) 3800px)"></div>
<div class="t" style="left:2855.5px;top:1660.7px;font-size:21.5px;line-height:21.5px;color:#4a505a;font-weight:normal;font-family:'Liberation Mono', monospace;transform-origin:0 85%;transform:scaleY(1.22);">2021-02-07 20:24 ~ 2021-02-07 20:39</div>
<div class="t" style="left:3421.0px;top:1660.0px;font-size:22.9px;line-height:22.9px;color:#4a505a;font-weight:normal;font-family:'Liberation Sans', sans-serif;">En</div>
<div class="t" style="left:3479.0px;top:1658.8px;font-size:24.4px;line-height:24.4px;color:#4a505a;font-weight:normal;font-family:'Liberation Sans', sans-serif;">Server Zone UTC + 0</div>
<svg class="r" style="left:0.0px;top:1686.0px;" width="20.0" height="14.0" viewBox="0 20 14"><path d="M0 2.8 A17.4 11.2 0 0 0 17.4 14 H0 Z" fill="#0e1118"/></svg>
<svg class="r" style="left:3788.0px;top:1694.0px;" width="12.0" height="6.0" viewBox="0 12 6"><path d="M0 6 Q8 5 12 1.5 V6 Z" fill="#000"/></svg>
</body></html>
